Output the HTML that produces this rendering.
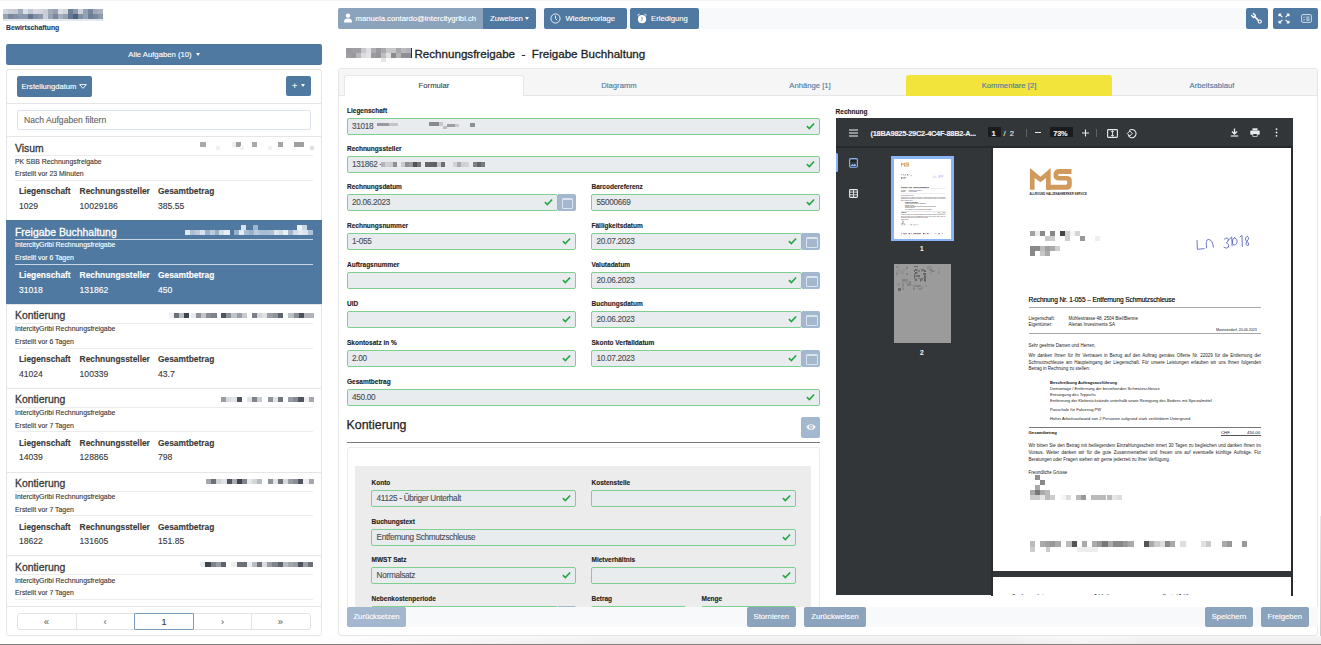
<!DOCTYPE html>
<html><head><meta charset="utf-8">
<style>
*{box-sizing:border-box;margin:0;padding:0}
html,body{width:1321px;height:645px;overflow:hidden;background:#fff;font-family:"Liberation Sans",sans-serif;color:#333;position:relative}
body *{-webkit-text-stroke:0.12px currentColor}
.a{position:absolute}
.t{line-height:1;white-space:nowrap}
.btn{position:absolute;background:#4f79a0;border-radius:2px;color:#fff;font-size:7.7px;line-height:21px;text-align:center;white-space:nowrap}
.lt{background:#a3b7cf}
.md{background:#8ba3bd}
.lbl{position:absolute;font-size:6.5px;font-weight:bold;color:#222;white-space:nowrap;line-height:1}
.inp{position:absolute;height:16.6px;background:#e9ecef;border:1px solid #7fcf8e;border-radius:2px;font-size:8.2px;letter-spacing:-0.3px;color:#4a4f55;line-height:15.6px;padding-left:4.6px;white-space:nowrap;overflow:hidden}
.inp .ck{position:absolute;right:4px;top:3px}
.cal{position:absolute;width:18px;height:16.6px;background:#a3b7cf;border-radius:0 2px 2px 0}
.cal::after{content:"";position:absolute;left:4.2px;top:4.2px;width:9.4px;height:8px;border:1px solid #dbe4ee;border-top-width:2px;border-radius:1.5px}
.tab{position:absolute;top:76px;height:20px;font-size:7.7px;line-height:20px;text-align:center;color:#4f79a0}
.caret{display:inline-block;border-left:2.5px solid transparent;border-right:2.5px solid transparent;border-top:3px solid #fff;vertical-align:1px}
</style></head><body>

<div class="a" style="left:0.00px;top:0.00px;width:1321.00px;height:1.00px;background:#f3f3f3;"></div>
<div class="a" style="left:3.00px;top:9.00px;width:5.00px;height:5.00px;background:rgb(210,214,222);"></div>
<div class="a" style="left:3.00px;top:14.00px;width:5.00px;height:5.00px;background:rgb(150,162,178);"></div>
<div class="a" style="left:8.00px;top:9.00px;width:5.00px;height:5.00px;background:rgb(200,205,214);"></div>
<div class="a" style="left:8.00px;top:14.00px;width:5.00px;height:5.00px;background:rgb(120,136,158);"></div>
<div class="a" style="left:13.00px;top:9.00px;width:5.00px;height:5.00px;background:rgb(196,201,211);"></div>
<div class="a" style="left:13.00px;top:14.00px;width:5.00px;height:5.00px;background:rgb(130,144,164);"></div>
<div class="a" style="left:18.00px;top:9.00px;width:5.00px;height:5.00px;background:rgb(160,170,186);"></div>
<div class="a" style="left:18.00px;top:14.00px;width:5.00px;height:5.00px;background:rgb(140,153,172);"></div>
<div class="a" style="left:23.00px;top:9.00px;width:5.00px;height:5.00px;background:rgb(220,223,229);"></div>
<div class="a" style="left:23.00px;top:14.00px;width:5.00px;height:5.00px;background:rgb(140,153,172);"></div>
<div class="a" style="left:28.00px;top:9.00px;width:5.00px;height:5.00px;background:rgb(194,199,210);"></div>
<div class="a" style="left:28.00px;top:14.00px;width:5.00px;height:5.00px;background:rgb(100,119,145);"></div>
<div class="a" style="left:33.00px;top:9.00px;width:5.00px;height:5.00px;background:rgb(214,217,224);"></div>
<div class="a" style="left:33.00px;top:14.00px;width:5.00px;height:5.00px;background:rgb(130,144,164);"></div>
<div class="a" style="left:38.00px;top:9.00px;width:5.00px;height:5.00px;background:rgb(210,214,220);"></div>
<div class="a" style="left:38.00px;top:14.00px;width:5.00px;height:5.00px;background:rgb(140,153,172);"></div>
<div class="a" style="left:43.00px;top:9.00px;width:5.00px;height:5.00px;background:rgb(200,205,214);"></div>
<div class="a" style="left:43.00px;top:14.00px;width:5.00px;height:5.00px;background:rgb(200,205,214);"></div>
<div class="a" style="left:48.00px;top:9.00px;width:5.00px;height:5.00px;background:rgb(160,171,186);"></div>
<div class="a" style="left:48.00px;top:14.00px;width:5.00px;height:5.00px;background:rgb(150,162,178);"></div>
<div class="a" style="left:53.00px;top:9.00px;width:5.00px;height:5.00px;background:rgb(150,160,178);"></div>
<div class="a" style="left:53.00px;top:14.00px;width:5.00px;height:5.00px;background:rgb(120,136,158);"></div>
<div class="a" style="left:58.00px;top:9.00px;width:5.00px;height:5.00px;background:rgb(218,221,227);"></div>
<div class="a" style="left:58.00px;top:14.00px;width:5.00px;height:5.00px;background:rgb(165,175,190);"></div>
<div class="a" style="left:63.00px;top:9.00px;width:5.00px;height:5.00px;background:rgb(208,212,219);"></div>
<div class="a" style="left:63.00px;top:14.00px;width:5.00px;height:5.00px;background:rgb(150,162,178);"></div>
<div class="a" style="left:68.00px;top:9.00px;width:5.00px;height:5.00px;background:rgb(110,128,152);"></div>
<div class="a" style="left:68.00px;top:14.00px;width:5.00px;height:5.00px;background:rgb(100,119,145);"></div>
<div class="a" style="left:73.00px;top:9.00px;width:5.00px;height:5.00px;background:rgb(140,153,172);"></div>
<div class="a" style="left:73.00px;top:14.00px;width:5.00px;height:5.00px;background:rgb(75,98,128);"></div>
<div class="a" style="left:78.00px;top:9.00px;width:5.00px;height:5.00px;background:rgb(206,210,218);"></div>
<div class="a" style="left:78.00px;top:14.00px;width:5.00px;height:5.00px;background:rgb(130,144,164);"></div>
<div class="a" style="left:83.00px;top:9.00px;width:5.00px;height:5.00px;background:rgb(150,162,178);"></div>
<div class="a" style="left:83.00px;top:14.00px;width:5.00px;height:5.00px;background:rgb(150,162,178);"></div>
<div class="a" style="left:88.00px;top:9.00px;width:5.00px;height:5.00px;background:rgb(118,134,156);"></div>
<div class="a" style="left:88.00px;top:14.00px;width:5.00px;height:5.00px;background:rgb(110,128,152);"></div>
<div class="a" style="left:93.00px;top:9.00px;width:5.00px;height:5.00px;background:rgb(160,170,186);"></div>
<div class="a" style="left:93.00px;top:14.00px;width:5.00px;height:5.00px;background:rgb(120,136,158);"></div>
<div class="a" style="left:98.00px;top:9.00px;width:5.00px;height:5.00px;background:rgb(168,177,191);"></div>
<div class="a" style="left:98.00px;top:14.00px;width:5.00px;height:5.00px;background:rgb(140,153,172);"></div>
<div class="a" style="left:3.00px;top:19.00px;width:100.00px;height:2.00px;background:#e4e7ec;"></div>
<div class="a t" style="left:6.00px;top:25.24px;font-size:6.8px;color:#1f3b5c;font-weight:bold;">Bewirtschaftung</div>
<div class="btn" style="left:6px;top:44px;width:316px;height:21px;">Alle Aufgaben (10) <span class="caret" style="margin-left:2px"></span></div>
<div class="a" style="left:6px;top:69px;width:316px;height:567px;border:1px solid #e6e6e6;border-radius:3px"></div>
<div class="btn" style="left:17px;top:76px;width:75px;height:20.5px;line-height:21px;font-size:7.6px;text-align:left;padding-left:4.5px">Erstellungdatum</div>
<svg class="a" style="left:79px;top:84px" width="8" height="5" viewBox="0 0 8 5"><path d="M0.6 0.6 H7.4 L4 4.4 Z" fill="none" stroke="#fff" stroke-width="0.9" stroke-linejoin="round"/></svg>
<div class="btn" style="left:286px;top:76px;width:25px;height:20px;line-height:20px;font-size:9px">+ <span class="caret" style="vertical-align:2px;margin-left:1px"></span></div>
<div class="a" style="left:7.00px;top:103.00px;width:314.00px;height:1.00px;background:#e5e5e5;"></div>
<div class="a" style="left:17px;top:110px;width:294px;height:20px;border:1px solid #dde3ea;border-radius:2px;font-size:8.6px;color:#666;line-height:18px;padding-left:6px">Nach Aufgaben filtern</div>
<div class="a" style="left:6px;top:136px;width:316px;height:470px;overflow:hidden">
<div class="a" style="left:1.00px;top:0.40px;width:314.00px;height:1.00px;background:#e6e6e6;"></div>
<div class="a t" style="left:9.00px;top:7.89px;font-size:10.4px;color:#3a3a3a;-webkit-text-stroke:0.3px #3a3a3a">Visum</div>
<div class="a" style="left:9.00px;top:19.40px;width:298.00px;height:1.00px;background:#ececec;"></div>
<div class="a t" style="left:9.00px;top:22.56px;font-size:6.9px;color:#383838;">PK SBB Rechnungsfreigabe</div>
<div class="a t" style="left:9.00px;top:35.36px;font-size:6.9px;color:#383838;">Erstellt vor 23 Minuten</div>
<div class="a" style="left:9.00px;top:44.00px;width:298.00px;height:1.00px;background:#ececec;"></div>
<div class="a t" style="left:13.00px;top:51.49px;font-size:8.4px;color:#3a3a3a;font-weight:bold;">Liegenschaft</div>
<div class="a t" style="left:73.60px;top:51.49px;font-size:8.4px;color:#3a3a3a;font-weight:bold;">Rechnungssteller</div>
<div class="a t" style="left:152.00px;top:51.49px;font-size:8.4px;color:#3a3a3a;font-weight:bold;">Gesamtbetrag</div>
<div class="a t" style="left:13.00px;top:65.92px;font-size:8.6px;color:#3a3a3a;">1029</div>
<div class="a t" style="left:73.60px;top:65.92px;font-size:8.6px;color:#3a3a3a;">10029186</div>
<div class="a t" style="left:152.00px;top:65.92px;font-size:8.6px;color:#3a3a3a;">385.55</div>
<div class="a" style="left:194.00px;top:6.40px;width:5.50px;height:5.00px;background:#a9a9ad;"></div>
<div class="a" style="left:226.00px;top:6.40px;width:5.00px;height:5.00px;background:#eeeeef;"></div>
<div class="a" style="left:230.00px;top:6.40px;width:5.00px;height:5.00px;background:#a0a0a4;"></div>
<div class="a" style="left:245.50px;top:6.40px;width:5.00px;height:5.00px;background:#a9a9ad;"></div>
<div class="a" style="left:271.50px;top:6.40px;width:5.50px;height:5.00px;background:#a5a5a8;"></div>
<div class="a" style="left:287.50px;top:6.40px;width:10.50px;height:5.00px;background:#a0a0a4;"></div>
<div class="a" style="left:210.00px;top:10.40px;width:4.00px;height:4.00px;background:#f0f0f2;"></div>
<div class="a" style="left:234.00px;top:10.40px;width:4.00px;height:4.00px;background:#f2f2f3;"></div>
<div class="a" style="left:262.00px;top:10.40px;width:4.00px;height:4.00px;background:#f2f2f3;"></div>
<div class="a" style="left:304.00px;top:10.40px;width:4.00px;height:4.00px;background:#e0e0e2;"></div>
<div class="a" style="left:0.00px;top:84.20px;width:316.00px;height:83.80px;background:#4f79a0;"></div>
<div class="a t" style="left:9.00px;top:91.69px;font-size:10.4px;color:#fff;-webkit-text-stroke:0.3px #fff">Freigabe Buchhaltung</div>
<div class="a" style="left:9.00px;top:103.20px;width:298.00px;height:1.00px;background:#c9d6e3;"></div>
<div class="a t" style="left:9.00px;top:106.36px;font-size:6.9px;color:#fff;">IntercityGribi Rechnungsfreigabe</div>
<div class="a t" style="left:9.00px;top:119.16px;font-size:6.9px;color:#fff;">Erstellt vor 6 Tagen</div>
<div class="a" style="left:9.00px;top:127.80px;width:298.00px;height:1.00px;background:#c9d6e3;"></div>
<div class="a t" style="left:13.00px;top:135.29px;font-size:8.4px;color:#fff;font-weight:bold;">Liegenschaft</div>
<div class="a t" style="left:73.60px;top:135.29px;font-size:8.4px;color:#fff;font-weight:bold;">Rechnungssteller</div>
<div class="a t" style="left:152.00px;top:135.29px;font-size:8.4px;color:#fff;font-weight:bold;">Gesamtbetrag</div>
<div class="a t" style="left:13.00px;top:149.72px;font-size:8.6px;color:#fff;">31018</div>
<div class="a t" style="left:73.60px;top:149.72px;font-size:8.6px;color:#fff;">131862</div>
<div class="a t" style="left:152.00px;top:149.72px;font-size:8.6px;color:#fff;">450</div>
<div class="a" style="left:235.00px;top:89.20px;width:5.00px;height:5.00px;background:#d8e2ec;"></div>
<div class="a" style="left:247.00px;top:89.20px;width:5.00px;height:5.00px;background:#9fb6cc;"></div>
<div class="a" style="left:291.00px;top:89.20px;width:5.00px;height:5.00px;background:#eef3f7;"></div>
<div class="a" style="left:296.00px;top:89.20px;width:5.00px;height:5.00px;background:#c9d7e4;"></div>
<div class="a" style="left:179.00px;top:94.20px;width:5.22px;height:5.30px;background:rgb(222,230,238);"></div><div class="a" style="left:183.92px;top:94.20px;width:5.22px;height:5.30px;background:rgb(171,191,211);"></div><div class="a" style="left:188.85px;top:94.20px;width:5.22px;height:5.30px;background:rgb(188,204,220);"></div><div class="a" style="left:193.77px;top:94.20px;width:5.22px;height:5.30px;background:rgb(217,226,235);"></div><div class="a" style="left:198.69px;top:94.20px;width:5.22px;height:5.30px;background:rgb(152,176,201);"></div><div class="a" style="left:203.62px;top:94.20px;width:5.22px;height:5.30px;background:rgb(186,203,219);"></div><div class="a" style="left:208.54px;top:94.20px;width:5.22px;height:5.30px;background:rgb(150,175,200);"></div><div class="a" style="left:213.46px;top:94.20px;width:5.22px;height:5.30px;background:rgb(211,221,232);"></div><div class="a" style="left:218.38px;top:94.20px;width:5.22px;height:5.30px;background:rgb(230,236,242);"></div><div class="a" style="left:228.23px;top:94.20px;width:5.22px;height:5.30px;background:rgb(152,176,201);"></div><div class="a" style="left:233.15px;top:94.20px;width:5.22px;height:5.30px;background:rgb(229,236,242);"></div><div class="a" style="left:238.08px;top:94.20px;width:5.22px;height:5.30px;background:rgb(168,189,209);"></div><div class="a" style="left:243.00px;top:94.20px;width:5.22px;height:5.30px;background:rgb(152,176,201);"></div><div class="a" style="left:247.92px;top:94.20px;width:5.22px;height:5.30px;background:rgb(187,203,219);"></div><div class="a" style="left:252.85px;top:94.20px;width:5.22px;height:5.30px;background:rgb(169,190,210);"></div><div class="a" style="left:257.77px;top:94.20px;width:5.22px;height:5.30px;background:rgb(168,189,209);"></div><div class="a" style="left:262.69px;top:94.20px;width:5.22px;height:5.30px;background:rgb(174,193,213);"></div><div class="a" style="left:267.62px;top:94.20px;width:5.22px;height:5.30px;background:rgb(221,229,237);"></div><div class="a" style="left:272.54px;top:94.20px;width:5.22px;height:5.30px;background:rgb(204,216,228);"></div><div class="a" style="left:277.46px;top:94.20px;width:5.22px;height:5.30px;background:rgb(234,239,244);"></div><div class="a" style="left:282.38px;top:94.20px;width:5.22px;height:5.30px;background:rgb(160,182,205);"></div><div class="a" style="left:287.31px;top:94.20px;width:5.22px;height:5.30px;background:rgb(211,221,232);"></div><div class="a" style="left:292.23px;top:94.20px;width:5.22px;height:5.30px;background:rgb(229,235,242);"></div><div class="a" style="left:297.15px;top:94.20px;width:5.22px;height:5.30px;background:rgb(220,228,237);"></div><div class="a" style="left:302.08px;top:94.20px;width:5.22px;height:5.30px;background:rgb(175,194,213);"></div>
<div class="a" style="left:1.00px;top:168.00px;width:314.00px;height:1.00px;background:#e6e6e6;"></div>
<div class="a t" style="left:9.00px;top:175.49px;font-size:10.4px;color:#3a3a3a;-webkit-text-stroke:0.3px #3a3a3a">Kontierung</div>
<div class="a" style="left:9.00px;top:187.00px;width:298.00px;height:1.00px;background:#ececec;"></div>
<div class="a t" style="left:9.00px;top:190.16px;font-size:6.9px;color:#383838;">IntercityGribi Rechnungsfreigabe</div>
<div class="a t" style="left:9.00px;top:202.96px;font-size:6.9px;color:#383838;">Erstellt vor 6 Tagen</div>
<div class="a" style="left:9.00px;top:211.60px;width:298.00px;height:1.00px;background:#ececec;"></div>
<div class="a t" style="left:13.00px;top:219.09px;font-size:8.4px;color:#3a3a3a;font-weight:bold;">Liegenschaft</div>
<div class="a t" style="left:73.60px;top:219.09px;font-size:8.4px;color:#3a3a3a;font-weight:bold;">Rechnungssteller</div>
<div class="a t" style="left:152.00px;top:219.09px;font-size:8.4px;color:#3a3a3a;font-weight:bold;">Gesamtbetrag</div>
<div class="a t" style="left:13.00px;top:233.52px;font-size:8.6px;color:#3a3a3a;">41024</div>
<div class="a t" style="left:73.60px;top:233.52px;font-size:8.6px;color:#3a3a3a;">100339</div>
<div class="a t" style="left:152.00px;top:233.52px;font-size:8.6px;color:#3a3a3a;">43.7</div>
<div class="a" style="left:163.08px;top:177.20px;width:5.15px;height:5.20px;background:#f0f0f2;"></div>
<div class="a" style="left:167.93px;top:177.20px;width:5.15px;height:5.20px;background:#6b7079;"></div>
<div class="a" style="left:173.05px;top:177.20px;width:5.15px;height:5.20px;background:#b8bcc2;"></div>
<div class="a" style="left:178.18px;top:177.20px;width:5.15px;height:5.20px;background:#3e4450;"></div>
<div class="a" style="left:184.89px;top:177.20px;width:5.15px;height:5.20px;background:#eaeaec;"></div>
<div class="a" style="left:190.01px;top:177.20px;width:5.15px;height:5.20px;background:#8e929a;"></div>
<div class="a" style="left:195.13px;top:177.20px;width:5.15px;height:5.20px;background:#c2c4c9;"></div>
<div class="a" style="left:200.26px;top:177.20px;width:5.15px;height:5.20px;background:#8a8e96;"></div>
<div class="a" style="left:205.38px;top:177.20px;width:5.15px;height:5.20px;background:#7f838c;"></div>
<div class="a" style="left:215.17px;top:177.20px;width:5.15px;height:5.20px;background:#4e5561;"></div>
<div class="a" style="left:220.29px;top:177.20px;width:5.15px;height:5.20px;background:#8f939a;"></div>
<div class="a" style="left:225.41px;top:177.20px;width:5.15px;height:5.20px;background:#c0c3c7;"></div>
<div class="a" style="left:230.54px;top:177.20px;width:5.15px;height:5.20px;background:#9a9ea4;"></div>
<div class="a" style="left:235.66px;top:177.20px;width:5.15px;height:5.20px;background:#c6c9cd;"></div>
<div class="a" style="left:246.05px;top:177.20px;width:5.15px;height:5.20px;background:#7b8088;"></div>
<div class="a" style="left:251.18px;top:177.20px;width:5.15px;height:5.20px;background:#d4d6d9;"></div>
<div class="a" style="left:256.30px;top:177.20px;width:5.15px;height:5.20px;background:#dfe1e3;"></div>
<div class="a" style="left:261.42px;top:177.20px;width:5.15px;height:5.20px;background:#9a9ea5;"></div>
<div class="a" style="left:266.55px;top:177.20px;width:5.15px;height:5.20px;background:#8f939a;"></div>
<div class="a" style="left:271.67px;top:177.20px;width:5.15px;height:5.20px;background:#5e646e;"></div>
<div class="a" style="left:282.39px;top:177.20px;width:5.15px;height:5.20px;background:#bcc0c5;"></div>
<div class="a" style="left:287.52px;top:177.20px;width:5.15px;height:5.20px;background:#8a8e96;"></div>
<div class="a" style="left:292.64px;top:177.20px;width:5.15px;height:5.20px;background:#4a515c;"></div>
<div class="a" style="left:297.76px;top:177.20px;width:5.15px;height:5.20px;background:#b0b4ba;"></div>
<div class="a" style="left:302.89px;top:177.20px;width:5.15px;height:5.20px;background:#b0b4ba;"></div>
<div class="a" style="left:1.00px;top:251.80px;width:314.00px;height:1.00px;background:#e6e6e6;"></div>
<div class="a t" style="left:9.00px;top:259.29px;font-size:10.4px;color:#3a3a3a;-webkit-text-stroke:0.3px #3a3a3a">Kontierung</div>
<div class="a" style="left:9.00px;top:270.80px;width:298.00px;height:1.00px;background:#ececec;"></div>
<div class="a t" style="left:9.00px;top:273.96px;font-size:6.9px;color:#383838;">IntercityGribi Rechnungsfreigabe</div>
<div class="a t" style="left:9.00px;top:286.76px;font-size:6.9px;color:#383838;">Erstellt vor 7 Tagen</div>
<div class="a" style="left:9.00px;top:295.40px;width:298.00px;height:1.00px;background:#ececec;"></div>
<div class="a t" style="left:13.00px;top:302.89px;font-size:8.4px;color:#3a3a3a;font-weight:bold;">Liegenschaft</div>
<div class="a t" style="left:73.60px;top:302.89px;font-size:8.4px;color:#3a3a3a;font-weight:bold;">Rechnungssteller</div>
<div class="a t" style="left:152.00px;top:302.89px;font-size:8.4px;color:#3a3a3a;font-weight:bold;">Gesamtbetrag</div>
<div class="a t" style="left:13.00px;top:317.32px;font-size:8.6px;color:#3a3a3a;">14039</div>
<div class="a t" style="left:73.60px;top:317.32px;font-size:8.6px;color:#3a3a3a;">128865</div>
<div class="a t" style="left:152.00px;top:317.32px;font-size:8.6px;color:#3a3a3a;">798</div>
<div class="a" style="left:215.17px;top:261.20px;width:5.15px;height:5.20px;background:#9a9ea4;"></div>
<div class="a" style="left:220.29px;top:261.20px;width:5.15px;height:5.20px;background:#dadcdf;"></div>
<div class="a" style="left:225.41px;top:261.20px;width:5.15px;height:5.20px;background:#e2e4e6;"></div>
<div class="a" style="left:230.54px;top:261.20px;width:5.15px;height:5.20px;background:#4e5561;"></div>
<div class="a" style="left:240.97px;top:261.20px;width:5.15px;height:5.20px;background:#e0e2e4;"></div>
<div class="a" style="left:246.09px;top:261.20px;width:5.15px;height:5.20px;background:#7f848b;"></div>
<div class="a" style="left:251.21px;top:261.20px;width:5.15px;height:5.20px;background:#c8cacd;"></div>
<div class="a" style="left:261.80px;top:261.20px;width:5.15px;height:5.20px;background:#8f939a;"></div>
<div class="a" style="left:266.92px;top:261.20px;width:5.15px;height:5.20px;background:#e2e4e6;"></div>
<div class="a" style="left:272.05px;top:261.20px;width:5.15px;height:5.20px;background:#6f747c;"></div>
<div class="a" style="left:282.15px;top:261.20px;width:5.15px;height:5.20px;background:#9a9ea4;"></div>
<div class="a" style="left:287.27px;top:261.20px;width:5.15px;height:5.20px;background:#868a92;"></div>
<div class="a" style="left:292.40px;top:261.20px;width:5.15px;height:5.20px;background:#4e5561;"></div>
<div class="a" style="left:297.52px;top:261.20px;width:5.15px;height:5.20px;background:#eceef0;"></div>
<div class="a" style="left:302.64px;top:261.20px;width:5.15px;height:5.20px;background:#a4a8ae;"></div>
<div class="a" style="left:1.00px;top:335.60px;width:314.00px;height:1.00px;background:#e6e6e6;"></div>
<div class="a t" style="left:9.00px;top:343.09px;font-size:10.4px;color:#3a3a3a;-webkit-text-stroke:0.3px #3a3a3a">Kontierung</div>
<div class="a" style="left:9.00px;top:354.60px;width:298.00px;height:1.00px;background:#ececec;"></div>
<div class="a t" style="left:9.00px;top:357.76px;font-size:6.9px;color:#383838;">IntercityGribi Rechnungsfreigabe</div>
<div class="a t" style="left:9.00px;top:370.56px;font-size:6.9px;color:#383838;">Erstellt vor 7 Tagen</div>
<div class="a" style="left:9.00px;top:379.20px;width:298.00px;height:1.00px;background:#ececec;"></div>
<div class="a t" style="left:13.00px;top:386.69px;font-size:8.4px;color:#3a3a3a;font-weight:bold;">Liegenschaft</div>
<div class="a t" style="left:73.60px;top:386.69px;font-size:8.4px;color:#3a3a3a;font-weight:bold;">Rechnungssteller</div>
<div class="a t" style="left:152.00px;top:386.69px;font-size:8.4px;color:#3a3a3a;font-weight:bold;">Gesamtbetrag</div>
<div class="a t" style="left:13.00px;top:401.12px;font-size:8.6px;color:#3a3a3a;">18622</div>
<div class="a t" style="left:73.60px;top:401.12px;font-size:8.6px;color:#3a3a3a;">131605</div>
<div class="a t" style="left:152.00px;top:401.12px;font-size:8.6px;color:#3a3a3a;">151.85</div>
<div class="a" style="left:200.03px;top:343.30px;width:5.15px;height:5.20px;background:#a4a8ae;"></div>
<div class="a" style="left:205.15px;top:343.30px;width:5.15px;height:5.20px;background:#6b7079;"></div>
<div class="a" style="left:210.27px;top:343.30px;width:5.15px;height:5.20px;background:#d0d3d6;"></div>
<div class="a" style="left:215.40px;top:343.30px;width:5.15px;height:5.20px;background:#e0e2e4;"></div>
<div class="a" style="left:220.52px;top:343.30px;width:5.15px;height:5.20px;background:#4e5561;"></div>
<div class="a" style="left:225.64px;top:343.30px;width:5.15px;height:5.20px;background:#a8acb2;"></div>
<div class="a" style="left:230.77px;top:343.30px;width:5.15px;height:5.20px;background:#3e4450;"></div>
<div class="a" style="left:235.89px;top:343.30px;width:5.15px;height:5.20px;background:#7f838c;"></div>
<div class="a" style="left:241.02px;top:343.30px;width:5.15px;height:5.20px;background:#e6e8ea;"></div>
<div class="a" style="left:246.14px;top:343.30px;width:5.15px;height:5.20px;background:#d4d6d9;"></div>
<div class="a" style="left:251.26px;top:343.30px;width:5.15px;height:5.20px;background:#b8bcc2;"></div>
<div class="a" style="left:261.56px;top:343.30px;width:5.15px;height:5.20px;background:#8f939a;"></div>
<div class="a" style="left:266.68px;top:343.30px;width:5.15px;height:5.20px;background:#e2e4e6;"></div>
<div class="a" style="left:271.81px;top:343.30px;width:5.15px;height:5.20px;background:#6f747c;"></div>
<div class="a" style="left:276.93px;top:343.30px;width:5.15px;height:5.20px;background:#d8dadd;"></div>
<div class="a" style="left:282.05px;top:343.30px;width:5.15px;height:5.20px;background:#9a9ea4;"></div>
<div class="a" style="left:287.18px;top:343.30px;width:5.15px;height:5.20px;background:#8a8e96;"></div>
<div class="a" style="left:292.30px;top:343.30px;width:5.15px;height:5.20px;background:#4e5561;"></div>
<div class="a" style="left:297.42px;top:343.30px;width:5.15px;height:5.20px;background:#eceef0;"></div>
<div class="a" style="left:302.55px;top:343.30px;width:5.15px;height:5.20px;background:#a4a8ae;"></div>
<div class="a" style="left:1.00px;top:419.40px;width:314.00px;height:1.00px;background:#e6e6e6;"></div>
<div class="a t" style="left:9.00px;top:426.89px;font-size:10.4px;color:#3a3a3a;-webkit-text-stroke:0.3px #3a3a3a">Kontierung</div>
<div class="a" style="left:9.00px;top:438.40px;width:298.00px;height:1.00px;background:#ececec;"></div>
<div class="a t" style="left:9.00px;top:441.56px;font-size:6.9px;color:#383838;">IntercityGribi Rechnungsfreigabe</div>
<div class="a t" style="left:9.00px;top:454.36px;font-size:6.9px;color:#383838;">Erstellt vor 7 Tagen</div>
<div class="a" style="left:9.00px;top:463.00px;width:298.00px;height:1.00px;background:#ececec;"></div>
<div class="a t" style="left:13.00px;top:470.49px;font-size:8.4px;color:#3a3a3a;font-weight:bold;">Liegenschaft</div>
<div class="a t" style="left:73.60px;top:470.49px;font-size:8.4px;color:#3a3a3a;font-weight:bold;">Rechnungssteller</div>
<div class="a t" style="left:152.00px;top:470.49px;font-size:8.4px;color:#3a3a3a;font-weight:bold;">Gesamtbetrag</div>
<div class="a" style="left:194.33px;top:426.30px;width:5.15px;height:5.20px;background:#e8eaec;"></div>
<div class="a" style="left:199.46px;top:426.30px;width:5.15px;height:5.20px;background:#3e4450;"></div>
<div class="a" style="left:204.58px;top:426.30px;width:5.15px;height:5.20px;background:#7f838c;"></div>
<div class="a" style="left:209.70px;top:426.30px;width:5.15px;height:5.20px;background:#9a9ea4;"></div>
<div class="a" style="left:214.83px;top:426.30px;width:5.15px;height:5.20px;background:#5e646e;"></div>
<div class="a" style="left:225.46px;top:426.30px;width:5.15px;height:5.20px;background:#eceef0;"></div>
<div class="a" style="left:230.59px;top:426.30px;width:5.15px;height:5.20px;background:#6b7079;"></div>
<div class="a" style="left:235.71px;top:426.30px;width:5.15px;height:5.20px;background:#6b7079;"></div>
<div class="a" style="left:240.83px;top:426.30px;width:5.15px;height:5.20px;background:#eceef0;"></div>
<div class="a" style="left:245.96px;top:426.30px;width:5.15px;height:5.20px;background:#b8bcc2;"></div>
<div class="a" style="left:251.08px;top:426.30px;width:5.15px;height:5.20px;background:#6f747c;"></div>
<div class="a" style="left:256.20px;top:426.30px;width:5.15px;height:5.20px;background:#dadcdf;"></div>
<div class="a" style="left:261.33px;top:426.30px;width:5.15px;height:5.20px;background:#9a9ea4;"></div>
<div class="a" style="left:266.45px;top:426.30px;width:5.15px;height:5.20px;background:#7f838c;"></div>
<div class="a" style="left:271.58px;top:426.30px;width:5.15px;height:5.20px;background:#5e646e;"></div>
<div class="a" style="left:276.70px;top:426.30px;width:5.15px;height:5.20px;background:#b8bcc2;"></div>
<div class="a" style="left:281.82px;top:426.30px;width:5.15px;height:5.20px;background:#a4a8ae;"></div>
<div class="a" style="left:286.95px;top:426.30px;width:5.15px;height:5.20px;background:#9a9ea4;"></div>
<div class="a" style="left:292.07px;top:426.30px;width:5.15px;height:5.20px;background:#4e5561;"></div>
<div class="a" style="left:297.19px;top:426.30px;width:5.15px;height:5.20px;background:#9a9ea4;"></div>
<div class="a" style="left:302.32px;top:426.30px;width:5.15px;height:5.20px;background:#6b7079;"></div>
</div>
<div class="a" style="left:7.00px;top:606.00px;width:314.00px;height:1.00px;background:#e5e5e5;"></div>
<div class="a" style="left:17px;top:613px;width:294px;height:16.5px;border:1px solid #e3e3e3;border-radius:3px"></div>
<div class="a" style="left:76.00px;top:614.00px;width:1.00px;height:14.50px;background:#e3e3e3;"></div>
<div class="a" style="left:251.00px;top:614.00px;width:1.00px;height:14.50px;background:#e3e3e3;"></div>
<div class="a" style="left:134px;top:613px;width:60px;height:16.5px;border:1px solid #7a9cc0;border-radius:1px"></div>
<div class="a" style="left:17px;top:614px;width:59px;height:16px;line-height:16px;text-align:center;font-size:9.5px;color:#666">&laquo;</div>
<div class="a" style="left:76px;top:614px;width:58px;height:16px;line-height:16px;text-align:center;font-size:9.5px;color:#666">&lsaquo;</div>
<div class="a" style="left:134px;top:614px;width:60px;height:16px;line-height:16px;text-align:center;font-size:9px;color:#333">1</div>
<div class="a" style="left:194px;top:614px;width:57px;height:16px;line-height:16px;text-align:center;font-size:9.5px;color:#666">&rsaquo;</div>
<div class="a" style="left:251px;top:614px;width:59px;height:16px;line-height:16px;text-align:center;font-size:9.5px;color:#666">&raquo;</div>
<div class="a" style="left:536.00px;top:8.00px;width:710.00px;height:21.00px;background:#f8f9fa;"></div>
<div class="btn md" style="left:338px;top:8px;width:146px;height:21px;border-radius:2px 0 0 2px;text-align:left;padding-left:17.5px">manuela.contardo@intercitygribi.ch</div>
<svg class="a" style="left:344px;top:13px" width="8" height="10" viewBox="0 0 8 10"><circle cx="4" cy="2.6" r="2.2" fill="#fff"/><path d="M0 9.5 C0 6.2 1.8 5.6 4 5.6 C6.2 5.6 8 6.2 8 9.5 Z" fill="#fff"/></svg>
<div class="btn" style="left:483px;top:8px;width:53px;height:21px;border-radius:0 2px 2px 0">Zuweisen <span class="caret"></span></div>
<div class="btn" style="left:544px;top:8px;width:83px;height:21px;text-align:left;padding-left:21.5px">Wiedervorlage</div>
<svg class="a" style="left:550px;top:12.5px" width="11" height="11" viewBox="0 0 11 11"><circle cx="5.5" cy="5.5" r="4.6" fill="none" stroke="#e8eef4" stroke-width="1"/><path d="M5.5 2.6 V5.7 L7.3 7.2" fill="none" stroke="#e8eef4" stroke-width="1"/></svg>
<div class="btn" style="left:630px;top:8px;width:69px;height:21px;text-align:left;padding-left:21px">Erledigung</div>
<svg class="a" style="left:636.5px;top:13px" width="10" height="11" viewBox="0 0 10 11"><circle cx="5" cy="6.2" r="4.1" fill="#fff"/><path d="M0.6 3 A1.8 1.8 0 0 1 3 0.8 Z M9.4 3 A1.8 1.8 0 0 0 7 0.8 Z" fill="#fff"/><path d="M5 3.8 V6.6 L4 7.8" stroke="#4f79a0" stroke-width="0.8" fill="none"/></svg>
<div class="btn" style="left:1246px;top:8px;width:22px;height:21px"></div>
<svg class="a" style="left:1250px;top:12px" width="13" height="13" viewBox="0 0 13 13"><g fill="none" stroke="#fff" stroke-linecap="round" stroke-linejoin="round"><path d="M1.6 3.4 L3.6 5.4 L5.4 3.6 L3.4 1.6" stroke-width="1.4"/><path d="M4.6 4.6 L8.6 8.6" stroke-width="1.5"/><circle cx="9.8" cy="9.6" r="1.6" stroke-width="1.1"/></g></svg>
<div class="btn" style="left:1273px;top:8px;width:45px;height:21px"></div>
<svg class="a" style="left:1278px;top:13px" width="12" height="11" viewBox="0 0 12 11"><g stroke="#fff" stroke-width="1.1" fill="none"><path d="M1 1 L4.4 4.2 M1 0.9 V3.3 M0.9 1 H3.3"/><path d="M11 1 L7.6 4.2 M11 0.9 V3.3 M11.1 1 H8.7"/><path d="M1 10 L4.4 6.8 M1 10.1 V7.7 M0.9 10 H3.3"/><path d="M11 10 L7.6 6.8 M11 10.1 V7.7 M11.1 10 H8.7"/></g></svg>
<svg class="a" style="left:1300.5px;top:13.5px" width="11" height="9" viewBox="0 0 11 9"><rect x="0.6" y="0.6" width="9.8" height="7.8" rx="1.2" fill="none" stroke="#dfe6ee" stroke-width="0.9"/><path d="M2.3 3.3 L3 3.9 L4 2.5 M2.3 5.8 L3 6.4 L4 5" stroke="#dfe6ee" stroke-width="0.7" fill="none"/><path d="M5.2 3 H8.6 M5.2 4 H8.6 M5.2 5.3 H8.6 M5.2 6.3 H8.6" stroke="#dfe6ee" stroke-width="0.7"/></svg>
<div class="a" style="left:346.00px;top:48.00px;width:5.30px;height:5.30px;background:rgb(154,154,158);"></div><div class="a" style="left:351.00px;top:48.00px;width:5.30px;height:5.30px;background:rgb(158,158,162);"></div><div class="a" style="left:356.00px;top:48.00px;width:5.30px;height:5.30px;background:rgb(158,158,163);"></div><div class="a" style="left:361.00px;top:48.00px;width:5.30px;height:5.30px;background:rgb(200,200,202);"></div><div class="a" style="left:366.00px;top:48.00px;width:5.30px;height:5.30px;background:rgb(224,224,226);"></div><div class="a" style="left:371.00px;top:48.00px;width:5.30px;height:5.30px;background:rgb(175,175,178);"></div><div class="a" style="left:376.00px;top:48.00px;width:5.30px;height:5.30px;background:rgb(155,155,159);"></div><div class="a" style="left:381.00px;top:48.00px;width:5.30px;height:5.30px;background:rgb(170,170,174);"></div><div class="a" style="left:386.00px;top:48.00px;width:5.30px;height:5.30px;background:rgb(199,199,202);"></div><div class="a" style="left:391.00px;top:48.00px;width:5.30px;height:5.30px;background:rgb(197,197,200);"></div><div class="a" style="left:396.00px;top:48.00px;width:5.30px;height:5.30px;background:rgb(167,167,171);"></div><div class="a" style="left:401.00px;top:48.00px;width:5.30px;height:5.30px;background:rgb(185,185,188);"></div><div class="a" style="left:406.00px;top:48.00px;width:5.30px;height:5.30px;background:rgb(179,179,183);"></div><div class="a" style="left:346.00px;top:53.00px;width:5.30px;height:5.30px;background:rgb(160,160,164);"></div><div class="a" style="left:351.00px;top:53.00px;width:5.30px;height:5.30px;background:rgb(154,154,158);"></div><div class="a" style="left:356.00px;top:53.00px;width:5.30px;height:5.30px;background:rgb(185,185,189);"></div><div class="a" style="left:361.00px;top:53.00px;width:5.30px;height:5.30px;background:rgb(220,220,222);"></div><div class="a" style="left:366.00px;top:53.00px;width:5.30px;height:5.30px;background:rgb(227,227,229);"></div><div class="a" style="left:371.00px;top:53.00px;width:5.30px;height:5.30px;background:rgb(155,155,159);"></div><div class="a" style="left:376.00px;top:53.00px;width:5.30px;height:5.30px;background:rgb(150,150,154);"></div><div class="a" style="left:381.00px;top:53.00px;width:5.30px;height:5.30px;background:rgb(191,191,194);"></div><div class="a" style="left:386.00px;top:53.00px;width:5.30px;height:5.30px;background:rgb(224,224,226);"></div><div class="a" style="left:391.00px;top:53.00px;width:5.30px;height:5.30px;background:rgb(138,138,143);"></div><div class="a" style="left:396.00px;top:53.00px;width:5.30px;height:5.30px;background:rgb(180,180,183);"></div><div class="a" style="left:401.00px;top:53.00px;width:5.30px;height:5.30px;background:rgb(142,142,147);"></div><div class="a" style="left:406.00px;top:53.00px;width:5.30px;height:5.30px;background:rgb(143,143,147);"></div>
<div class="a" style="left:381.00px;top:58.00px;width:5.00px;height:4.00px;background:#e6e6e8;"></div>
<div class="a" style="left:411.00px;top:48.00px;width:1.00px;height:10.00px;background:#333;"></div>
<div class="a t" style="left:414.50px;top:47.77px;font-size:11.6px;color:#222;-webkit-text-stroke:0.3px #222">Rechnungsfreigabe &nbsp;-&nbsp; Freigabe Buchhaltung</div>
<div class="a" style="left:338px;top:68px;width:980px;height:568px;border:1px solid #e6e6e6;border-radius:3px"></div>
<div class="a" style="left:339.00px;top:69.00px;width:978.00px;height:27.00px;background:#f6f6f6;border-bottom:1px solid #e6e6e8"></div>
<div class="tab" style="left:344px;top:75.3px;width:180px;background:#fff;border:1px solid #e8e8eb;border-bottom:none;color:#444;border-radius:3px 3px 0 0;height:20.4px;line-height:20.2px">Formular</div>
<div class="tab" style="left:524px;width:190px">Diagramm</div>
<div class="tab" style="left:714px;width:192px">Anhänge [1]</div>
<div class="tab" style="left:906px;top:75.3px;width:206px;height:20.4px;line-height:21.6px;background:#f2e43a;color:#4f79a0;border-radius:3px 3px 0 0">Kommentare [2]</div>
<div class="tab" style="left:1112px;width:200px">Arbeitsablauf</div>
<div class="a t" style="left:347.00px;top:107.99px;font-size:6.5px;color:#222;font-weight:bold;">Liegenschaft</div><div class="inp" style="left:346.50px;top:118.00px;width:473.50px">3101<span style="letter-spacing:-1px">8</span><svg class="ck" viewBox="0 0 10 8" width="9" height="8"><path d="M1 4.2 L3.7 6.8 L9 1.2" fill="none" stroke="#28a745" stroke-width="1.9"/></svg></div>
<div class="a" style="left:376.50px;top:122.50px;width:12.00px;height:3.00px;background:#9a9a9e;"></div>
<div class="a" style="left:388.50px;top:122.50px;width:9.00px;height:3.00px;background:#c4c4c8;"></div>
<div class="a" style="left:428.50px;top:121.50px;width:10.00px;height:4.00px;background:#8a8a8e;"></div>
<div class="a" style="left:438.50px;top:121.50px;width:4.00px;height:4.00px;background:#c8c8cc;"></div>
<div class="a" style="left:443.00px;top:125.50px;width:4.00px;height:3.00px;background:#bdbdc0;"></div>
<div class="a" style="left:447.00px;top:123.50px;width:8.00px;height:3.00px;background:#9d9da0;"></div>
<div class="a" style="left:455.00px;top:123.50px;width:4.00px;height:3.00px;background:#c8c8cc;"></div>
<div class="a" style="left:469.50px;top:122.50px;width:5.00px;height:4.00px;background:#8f8f93;"></div>
<div class="a t" style="left:347.00px;top:145.99px;font-size:6.5px;color:#222;font-weight:bold;">Rechnungssteller</div><div class="inp" style="left:346.50px;top:156.00px;width:473.50px">131862 -<svg class="ck" viewBox="0 0 10 8" width="9" height="8"><path d="M1 4.2 L3.7 6.8 L9 1.2" fill="none" stroke="#28a745" stroke-width="1.9"/></svg></div>
<div class="a" style="left:381.00px;top:162.00px;width:4.30px;height:4.80px;background:rgb(180,180,185);"></div><div class="a" style="left:385.00px;top:162.00px;width:4.30px;height:4.80px;background:rgb(207,207,212);"></div><div class="a" style="left:389.00px;top:162.00px;width:4.30px;height:4.80px;background:rgb(204,204,209);"></div><div class="a" style="left:393.00px;top:162.00px;width:4.30px;height:4.80px;background:rgb(142,142,147);"></div><div class="a" style="left:401.00px;top:162.00px;width:4.30px;height:4.80px;background:rgb(201,201,206);"></div><div class="a" style="left:405.00px;top:162.00px;width:4.30px;height:4.80px;background:rgb(143,143,148);"></div><div class="a" style="left:409.00px;top:162.00px;width:4.30px;height:4.80px;background:rgb(153,153,158);"></div><div class="a" style="left:413.00px;top:162.00px;width:4.30px;height:4.80px;background:rgb(81,81,86);"></div><div class="a" style="left:417.00px;top:162.00px;width:4.30px;height:4.80px;background:rgb(117,117,122);"></div><div class="a" style="left:425.00px;top:162.00px;width:4.30px;height:4.80px;background:rgb(101,101,106);"></div><div class="a" style="left:429.00px;top:162.00px;width:4.30px;height:4.80px;background:rgb(98,98,103);"></div><div class="a" style="left:433.00px;top:162.00px;width:4.30px;height:4.80px;background:rgb(97,97,102);"></div><div class="a" style="left:437.00px;top:162.00px;width:4.30px;height:4.80px;background:rgb(197,197,202);"></div><div class="a" style="left:441.00px;top:162.00px;width:4.30px;height:4.80px;background:rgb(109,109,114);"></div><div class="a" style="left:453.00px;top:162.00px;width:4.30px;height:4.80px;background:rgb(209,209,214);"></div><div class="a" style="left:457.00px;top:162.00px;width:4.30px;height:4.80px;background:rgb(171,171,176);"></div><div class="a" style="left:461.00px;top:162.00px;width:4.30px;height:4.80px;background:rgb(207,207,212);"></div><div class="a" style="left:465.00px;top:162.00px;width:4.30px;height:4.80px;background:rgb(210,210,215);"></div><div class="a" style="left:473.00px;top:162.00px;width:4.30px;height:4.80px;background:rgb(128,128,133);"></div><div class="a" style="left:477.00px;top:162.00px;width:4.30px;height:4.80px;background:rgb(99,99,104);"></div><div class="a" style="left:481.00px;top:162.00px;width:4.30px;height:4.80px;background:rgb(120,120,125);"></div>
<div class="a t" style="left:347.00px;top:183.99px;font-size:6.5px;color:#222;font-weight:bold;">Rechnungsdatum</div><div class="inp" style="left:346.50px;top:194.00px;width:211.00px">20.06.2023<svg class="ck" viewBox="0 0 10 8" width="9" height="8"><path d="M1 4.2 L3.7 6.8 L9 1.2" fill="none" stroke="#28a745" stroke-width="1.9"/></svg></div><div class="cal" style="left:557.50px;top:194.00px"></div>
<div class="a t" style="left:591.50px;top:183.99px;font-size:6.5px;color:#222;font-weight:bold;">Barcodereferenz</div><div class="inp" style="left:591.00px;top:194.00px;width:229.00px">55000669<svg class="ck" viewBox="0 0 10 8" width="9" height="8"><path d="M1 4.2 L3.7 6.8 L9 1.2" fill="none" stroke="#28a745" stroke-width="1.9"/></svg></div>
<div class="a t" style="left:347.00px;top:222.99px;font-size:6.5px;color:#222;font-weight:bold;">Rechnungsnummer</div><div class="inp" style="left:346.50px;top:233.00px;width:229.00px">1-055<svg class="ck" viewBox="0 0 10 8" width="9" height="8"><path d="M1 4.2 L3.7 6.8 L9 1.2" fill="none" stroke="#28a745" stroke-width="1.9"/></svg></div>
<div class="a t" style="left:591.50px;top:222.99px;font-size:6.5px;color:#222;font-weight:bold;">Fälligkeitsdatum</div><div class="inp" style="left:591.00px;top:233.00px;width:211.00px">20.07.2023<svg class="ck" viewBox="0 0 10 8" width="9" height="8"><path d="M1 4.2 L3.7 6.8 L9 1.2" fill="none" stroke="#28a745" stroke-width="1.9"/></svg></div><div class="cal" style="left:802.00px;top:233.00px"></div>
<div class="a t" style="left:347.00px;top:261.99px;font-size:6.5px;color:#222;font-weight:bold;">Auftragsnummer</div><div class="inp" style="left:346.50px;top:272.00px;width:229.00px"><svg class="ck" viewBox="0 0 10 8" width="9" height="8"><path d="M1 4.2 L3.7 6.8 L9 1.2" fill="none" stroke="#28a745" stroke-width="1.9"/></svg></div>
<div class="a t" style="left:591.50px;top:261.99px;font-size:6.5px;color:#222;font-weight:bold;">Valutadatum</div><div class="inp" style="left:591.00px;top:272.00px;width:211.00px">20.06.2023<svg class="ck" viewBox="0 0 10 8" width="9" height="8"><path d="M1 4.2 L3.7 6.8 L9 1.2" fill="none" stroke="#28a745" stroke-width="1.9"/></svg></div><div class="cal" style="left:802.00px;top:272.00px"></div>
<div class="a t" style="left:347.00px;top:300.99px;font-size:6.5px;color:#222;font-weight:bold;">UID</div><div class="inp" style="left:346.50px;top:311.00px;width:229.00px"><svg class="ck" viewBox="0 0 10 8" width="9" height="8"><path d="M1 4.2 L3.7 6.8 L9 1.2" fill="none" stroke="#28a745" stroke-width="1.9"/></svg></div>
<div class="a t" style="left:591.50px;top:300.99px;font-size:6.5px;color:#222;font-weight:bold;">Buchungsdatum</div><div class="inp" style="left:591.00px;top:311.00px;width:211.00px">20.06.2023<svg class="ck" viewBox="0 0 10 8" width="9" height="8"><path d="M1 4.2 L3.7 6.8 L9 1.2" fill="none" stroke="#28a745" stroke-width="1.9"/></svg></div><div class="cal" style="left:802.00px;top:311.00px"></div>
<div class="a t" style="left:347.00px;top:339.99px;font-size:6.5px;color:#222;font-weight:bold;">Skontosatz in %</div><div class="inp" style="left:346.50px;top:350.00px;width:229.00px">2.00<svg class="ck" viewBox="0 0 10 8" width="9" height="8"><path d="M1 4.2 L3.7 6.8 L9 1.2" fill="none" stroke="#28a745" stroke-width="1.9"/></svg></div>
<div class="a t" style="left:591.50px;top:339.99px;font-size:6.5px;color:#222;font-weight:bold;">Skonto Verfalldatum</div><div class="inp" style="left:591.00px;top:350.00px;width:211.00px">10.07.2023<svg class="ck" viewBox="0 0 10 8" width="9" height="8"><path d="M1 4.2 L3.7 6.8 L9 1.2" fill="none" stroke="#28a745" stroke-width="1.9"/></svg></div><div class="cal" style="left:802.00px;top:350.00px"></div>
<div class="a t" style="left:347.00px;top:378.99px;font-size:6.5px;color:#222;font-weight:bold;">Gesamtbetrag</div><div class="inp" style="left:346.50px;top:389.00px;width:473.50px">450.00<svg class="ck" viewBox="0 0 10 8" width="9" height="8"><path d="M1 4.2 L3.7 6.8 L9 1.2" fill="none" stroke="#28a745" stroke-width="1.9"/></svg></div>
<div class="a t" style="left:346.50px;top:418.80px;font-size:12.4px;color:#222;-webkit-text-stroke:0.25px #222">Kontierung</div>
<div class="a" style="left:801px;top:417px;width:19px;height:21px;background:#a3b7cf;border-radius:2px"></div>
<svg class="a" style="left:805.5px;top:422.5px" width="10" height="8" viewBox="0 0 10 8"><path d="M0.3 4 C2.3 0.2 7.7 0.2 9.7 4 C7.7 7.8 2.3 7.8 0.3 4 Z M5 2 A2 2 0 1 0 5 6 A2 2 0 1 0 5 2 Z" fill="#f4f7fa" fill-rule="evenodd"/><circle cx="5" cy="4" r="0.9" fill="#dfe7ef"/></svg>
<div class="a" style="left:346.50px;top:442.00px;width:473.50px;height:1.00px;background:#7a7a7a;"></div>
<div class="a" style="left:339px;top:446px;width:490px;height:161px;overflow:hidden">
<div class="a" style="left:7.5px;top:1.2px;width:473px;height:200px;border:1px solid #ececec;border-radius:3px"></div>
<div class="a" style="left:16.2px;top:20px;width:456px;height:200px;background:#ececec"></div>
<div class="a t" style="left:32.50px;top:33.99px;font-size:6.5px;color:#222;font-weight:bold;">Konto</div><div class="inp" style="left:32.00px;top:44.00px;width:205.00px">41125 - Übriger Unterhalt<svg class="ck" viewBox="0 0 10 8" width="9" height="8"><path d="M1 4.2 L3.7 6.8 L9 1.2" fill="none" stroke="#28a745" stroke-width="1.9"/></svg></div>
<div class="a t" style="left:252.50px;top:33.99px;font-size:6.5px;color:#222;font-weight:bold;">Kostenstelle</div><div class="inp" style="left:252.00px;top:44.00px;width:205.00px"><svg class="ck" viewBox="0 0 10 8" width="9" height="8"><path d="M1 4.2 L3.7 6.8 L9 1.2" fill="none" stroke="#28a745" stroke-width="1.9"/></svg></div>
<div class="a t" style="left:32.50px;top:72.99px;font-size:6.5px;color:#222;font-weight:bold;">Buchungstext</div><div class="inp" style="left:32.00px;top:83.00px;width:425.00px">Entfernung Schmutzschleuse<svg class="ck" viewBox="0 0 10 8" width="9" height="8"><path d="M1 4.2 L3.7 6.8 L9 1.2" fill="none" stroke="#28a745" stroke-width="1.9"/></svg></div>
<div class="a t" style="left:32.50px;top:110.99px;font-size:6.5px;color:#222;font-weight:bold;">MWST Satz</div><div class="inp" style="left:32.00px;top:121.00px;width:205.00px">Normalsatz<svg class="ck" viewBox="0 0 10 8" width="9" height="8"><path d="M1 4.2 L3.7 6.8 L9 1.2" fill="none" stroke="#28a745" stroke-width="1.9"/></svg></div>
<div class="a t" style="left:252.50px;top:110.99px;font-size:6.5px;color:#222;font-weight:bold;">Mietverhältnis</div><div class="inp" style="left:252.00px;top:121.00px;width:205.00px"><svg class="ck" viewBox="0 0 10 8" width="9" height="8"><path d="M1 4.2 L3.7 6.8 L9 1.2" fill="none" stroke="#28a745" stroke-width="1.9"/></svg></div>
<div class="a t" style="left:32.50px;top:149.59px;font-size:6.5px;color:#222;font-weight:bold;">Nebenkostenperiode</div><div class="inp" style="left:32.00px;top:159.60px;width:187.00px"><svg class="ck" viewBox="0 0 10 8" width="9" height="8"><path d="M1 4.2 L3.7 6.8 L9 1.2" fill="none" stroke="#28a745" stroke-width="1.9"/></svg></div><div class="cal" style="left:219.00px;top:159.60px"></div>
<div class="a t" style="left:252.50px;top:149.59px;font-size:6.5px;color:#222;font-weight:bold;">Betrag</div><div class="inp" style="left:252.00px;top:159.60px;width:94.50px"><svg class="ck" viewBox="0 0 10 8" width="9" height="8"><path d="M1 4.2 L3.7 6.8 L9 1.2" fill="none" stroke="#28a745" stroke-width="1.9"/></svg></div>
<div class="a t" style="left:362.50px;top:149.59px;font-size:6.5px;color:#222;font-weight:bold;">Menge</div><div class="inp" style="left:362.00px;top:159.60px;width:94.50px"><svg class="ck" viewBox="0 0 10 8" width="9" height="8"><path d="M1 4.2 L3.7 6.8 L9 1.2" fill="none" stroke="#28a745" stroke-width="1.9"/></svg></div>
</div>
<div class="a" style="left:836.00px;top:118.00px;width:457.00px;height:477.00px;background:#323639;"></div>
<div class="a" style="left:836.00px;top:146.00px;width:457.00px;height:1.50px;background:#26292b;"></div>
<svg class="a" style="left:848.5px;top:128.5px" width="9" height="8" viewBox="0 0 9 8"><path d="M0 1 H9 M0 4 H9 M0 7 H9" stroke="#f1f1f1" stroke-width="1.1"/></svg>
<div class="a t" style="left:870.50px;top:129.83px;font-size:7.4px;color:#f1f1f1;font-weight:bold;letter-spacing:-0.25px">(18BA9825-29C2-4C4F-88B2-A...</div>
<div class="a" style="left:988.40px;top:127.30px;width:12.20px;height:10.00px;background:#191b1c;"></div>
<div class="a t" style="left:991.50px;top:129.66px;font-size:7.6px;color:#f1f1f1;font-weight:bold;">1</div>
<div class="a t" style="left:1003.50px;top:129.66px;font-size:7.6px;color:#e8eaed;">/</div>
<div class="a t" style="left:1009.80px;top:129.66px;font-size:7.6px;color:#e8eaed;">2</div>
<div class="a" style="left:1026.30px;top:129.00px;width:0.80px;height:8.00px;background:#5f6368;"></div>
<div class="a" style="left:1034.70px;top:132.00px;width:6.80px;height:1.20px;background:#e8eaed;"></div>
<div class="a" style="left:1049.90px;top:127.30px;width:23.40px;height:10.00px;background:#191b1c;"></div>
<div class="a t" style="left:1053.30px;top:129.92px;font-size:7.3px;color:#f1f1f1;font-weight:bold;letter-spacing:-0.2px">73%</div>
<svg class="a" style="left:1081.5px;top:128.5px" width="8" height="8" viewBox="0 0 8 8"><path d="M0 4 H7 M3.5 0.5 V7.5" stroke="#e8eaed" stroke-width="1.1"/></svg>
<div class="a" style="left:1096.30px;top:129.00px;width:0.80px;height:8.00px;background:#5f6368;"></div>
<svg class="a" style="left:1106.5px;top:128.5px" width="11" height="9" viewBox="0 0 11 9"><rect x="0.6" y="0.6" width="9.8" height="7.8" rx="0.8" fill="none" stroke="#e8eaed" stroke-width="1.1"/><path d="M5.5 1.8 V7.2 M4 3 L5.5 1.8 L7 3 M4 6 L5.5 7.2 L7 6" stroke="#e8eaed" stroke-width="0.9" fill="none"/></svg>
<svg class="a" style="left:1125.5px;top:127.5px" width="11" height="11" viewBox="0 0 11 11"><path d="M3.2 2.6 A4.1 4.1 0 1 1 2.2 7.2" fill="none" stroke="#e8eaed" stroke-width="1.1"/><path d="M1.3 5.5 L3.8 3 L6.3 5.5 L3.8 8 Z" fill="none" stroke="#e8eaed" stroke-width="1"/></svg>
<svg class="a" style="left:1230px;top:128px" width="9" height="9" viewBox="0 0 9 9"><path d="M4.5 0.5 V5.5 M2 3.5 L4.5 6 L7 3.5" stroke="#e8eaed" stroke-width="1.3" fill="none"/><path d="M0.8 8 H8.2" stroke="#e8eaed" stroke-width="1.2"/></svg>
<svg class="a" style="left:1250px;top:128px" width="10" height="9" viewBox="0 0 10 9"><rect x="2.5" y="0.3" width="5" height="2" fill="#e8eaed"/><rect x="0.3" y="2.6" width="9.4" height="4.2" rx="1" fill="#e8eaed"/><rect x="2.5" y="5.5" width="5" height="3.2" fill="#e8eaed"/><rect x="3.2" y="6" width="3.6" height="2" fill="#323639"/></svg>
<svg class="a" style="left:1274.5px;top:128px" width="3" height="9" viewBox="0 0 3 9"><circle cx="1.5" cy="1.2" r="0.9" fill="#e8eaed"/><circle cx="1.5" cy="4.5" r="0.9" fill="#e8eaed"/><circle cx="1.5" cy="7.8" r="0.9" fill="#e8eaed"/></svg>
<div class="a" style="left:835.50px;top:153.00px;width:2.50px;height:19.00px;background:#8ab4f8;border-radius:0 1.5px 1.5px 0"></div>
<svg class="a" style="left:848.5px;top:157.5px" width="9" height="10" viewBox="0 0 9 10"><rect x="0.6" y="0.6" width="7.8" height="8.6" rx="1.2" fill="none" stroke="#8ab4f8" stroke-width="1.1"/><rect x="1.8" y="2" width="5.4" height="2" fill="#1f2224"/><path d="M1.5 8 L3.3 5.8 L4.5 7 L5.8 5.6 L7.5 8 Z" fill="#8ab4f8"/></svg>
<svg class="a" style="left:848.5px;top:189px" width="9" height="9" viewBox="0 0 9 9"><rect x="0.6" y="0.6" width="7.8" height="7.8" rx="0.8" fill="none" stroke="#e8eaed" stroke-width="1.1"/><path d="M4.5 0.6 V8.4 M0.6 3.1 H8.4 M0.6 5.8 H8.4" stroke="#e8eaed" stroke-width="0.9"/></svg>
<div class="a" style="left:891.40px;top:156.00px;width:62.50px;height:85.20px;background:#8ab4f8;"></div>
<div class="a" style="left:894.00px;top:158.60px;width:57.30px;height:80.00px;background:#fff;"></div>
<div class="a t" style="left:920.00px;top:245.79px;font-size:6.5px;color:#e8eaed;font-weight:bold;">1</div>
<div class="a" style="left:894.40px;top:263.50px;width:56.60px;height:79.30px;background:#9b9b9b;"></div>
<div class="a t" style="left:920.00px;top:349.79px;font-size:6.5px;color:#e8eaed;font-weight:bold;">2</div>
<div class="a" style="left:896.00px;top:265.50px;width:2.30px;height:2.10px;background:rgb(133,133,135);"></div><div class="a" style="left:898.00px;top:265.50px;width:2.30px;height:2.10px;background:rgb(148,148,150);"></div><div class="a" style="left:906.00px;top:265.50px;width:2.30px;height:2.10px;background:rgb(144,144,146);"></div><div class="a" style="left:906.00px;top:267.30px;width:2.30px;height:2.10px;background:rgb(131,131,133);"></div><div class="a" style="left:898.00px;top:269.10px;width:2.30px;height:2.10px;background:rgb(142,142,144);"></div><div class="a" style="left:902.00px;top:269.10px;width:2.30px;height:2.10px;background:rgb(145,145,147);"></div><div class="a" style="left:904.00px;top:269.10px;width:2.30px;height:2.10px;background:rgb(147,147,149);"></div><div class="a" style="left:896.00px;top:270.90px;width:2.30px;height:2.10px;background:rgb(143,143,145);"></div><div class="a" style="left:900.00px;top:270.90px;width:2.30px;height:2.10px;background:rgb(142,142,144);"></div><div class="a" style="left:902.00px;top:270.90px;width:2.30px;height:2.10px;background:rgb(148,148,150);"></div><div class="a" style="left:896.00px;top:272.70px;width:2.30px;height:2.10px;background:rgb(134,134,136);"></div><div class="a" style="left:902.00px;top:272.70px;width:2.30px;height:2.10px;background:rgb(147,147,149);"></div><div class="a" style="left:906.00px;top:272.70px;width:2.30px;height:2.10px;background:rgb(131,131,133);"></div>
<div class="a" style="left:913.50px;top:265.50px;width:4.00px;height:0.80px;background:#6a6a6a;"></div>
<div class="a" style="left:915.20px;top:269.00px;width:1.80px;height:1.74px;background:rgb(107,107,109);"></div><div class="a" style="left:916.70px;top:269.00px;width:1.80px;height:1.74px;background:rgb(128,128,130);"></div><div class="a" style="left:921.20px;top:269.00px;width:1.80px;height:1.74px;background:rgb(113,113,115);"></div><div class="a" style="left:922.70px;top:269.00px;width:1.80px;height:1.74px;background:rgb(104,104,106);"></div><div class="a" style="left:913.70px;top:270.44px;width:1.80px;height:1.74px;background:rgb(103,103,105);"></div><div class="a" style="left:918.20px;top:270.44px;width:1.80px;height:1.74px;background:rgb(121,121,123);"></div><div class="a" style="left:921.20px;top:270.44px;width:1.80px;height:1.74px;background:rgb(131,131,133);"></div><div class="a" style="left:924.20px;top:270.44px;width:1.80px;height:1.74px;background:rgb(101,101,103);"></div><div class="a" style="left:915.20px;top:271.89px;width:1.80px;height:1.74px;background:rgb(99,99,101);"></div><div class="a" style="left:916.70px;top:271.89px;width:1.80px;height:1.74px;background:rgb(133,133,135);"></div><div class="a" style="left:913.70px;top:273.33px;width:1.80px;height:1.74px;background:rgb(119,119,121);"></div><div class="a" style="left:922.70px;top:273.33px;width:1.80px;height:1.74px;background:rgb(105,105,107);"></div><div class="a" style="left:924.20px;top:273.33px;width:1.80px;height:1.74px;background:rgb(98,98,100);"></div><div class="a" style="left:913.70px;top:274.78px;width:1.80px;height:1.74px;background:rgb(99,99,101);"></div><div class="a" style="left:915.20px;top:274.78px;width:1.80px;height:1.74px;background:rgb(123,123,125);"></div><div class="a" style="left:916.70px;top:274.78px;width:1.80px;height:1.74px;background:rgb(111,111,113);"></div><div class="a" style="left:918.20px;top:274.78px;width:1.80px;height:1.74px;background:rgb(107,107,109);"></div><div class="a" style="left:924.20px;top:274.78px;width:1.80px;height:1.74px;background:rgb(127,127,129);"></div><div class="a" style="left:913.70px;top:276.22px;width:1.80px;height:1.74px;background:rgb(112,112,114);"></div><div class="a" style="left:924.20px;top:276.22px;width:1.80px;height:1.74px;background:rgb(96,96,98);"></div><div class="a" style="left:913.70px;top:277.67px;width:1.80px;height:1.74px;background:rgb(107,107,109);"></div><div class="a" style="left:915.20px;top:277.67px;width:1.80px;height:1.74px;background:rgb(137,137,139);"></div><div class="a" style="left:918.20px;top:277.67px;width:1.80px;height:1.74px;background:rgb(124,124,126);"></div><div class="a" style="left:919.70px;top:277.67px;width:1.80px;height:1.74px;background:rgb(136,136,138);"></div><div class="a" style="left:921.20px;top:277.67px;width:1.80px;height:1.74px;background:rgb(106,106,108);"></div><div class="a" style="left:922.70px;top:277.67px;width:1.80px;height:1.74px;background:rgb(120,120,122);"></div><div class="a" style="left:924.20px;top:277.67px;width:1.80px;height:1.74px;background:rgb(121,121,123);"></div><div class="a" style="left:915.20px;top:279.11px;width:1.80px;height:1.74px;background:rgb(104,104,106);"></div><div class="a" style="left:919.70px;top:279.11px;width:1.80px;height:1.74px;background:rgb(97,97,99);"></div><div class="a" style="left:921.20px;top:279.11px;width:1.80px;height:1.74px;background:rgb(123,123,125);"></div><div class="a" style="left:924.20px;top:279.11px;width:1.80px;height:1.74px;background:rgb(97,97,99);"></div><div class="a" style="left:913.70px;top:280.56px;width:1.80px;height:1.74px;background:rgb(139,139,141);"></div><div class="a" style="left:919.70px;top:280.56px;width:1.80px;height:1.74px;background:rgb(127,127,129);"></div><div class="a" style="left:924.20px;top:280.56px;width:1.80px;height:1.74px;background:rgb(123,123,125);"></div>
<div class="a" style="left:927.00px;top:265.50px;width:2.47px;height:1.90px;background:rgb(143,143,145);"></div><div class="a" style="left:929.17px;top:265.50px;width:2.47px;height:1.90px;background:rgb(138,138,140);"></div><div class="a" style="left:927.00px;top:267.10px;width:2.47px;height:1.90px;background:rgb(137,137,139);"></div><div class="a" style="left:929.17px;top:267.10px;width:2.47px;height:1.90px;background:rgb(146,146,148);"></div><div class="a" style="left:937.83px;top:267.10px;width:2.47px;height:1.90px;background:rgb(146,146,148);"></div><div class="a" style="left:929.17px;top:268.70px;width:2.47px;height:1.90px;background:rgb(130,130,132);"></div><div class="a" style="left:931.33px;top:270.30px;width:2.47px;height:1.90px;background:rgb(129,129,131);"></div><div class="a" style="left:933.50px;top:270.30px;width:2.47px;height:1.90px;background:rgb(148,148,150);"></div><div class="a" style="left:937.83px;top:270.30px;width:2.47px;height:1.90px;background:rgb(147,147,149);"></div><div class="a" style="left:929.17px;top:271.90px;width:2.47px;height:1.90px;background:rgb(146,146,148);"></div><div class="a" style="left:937.83px;top:271.90px;width:2.47px;height:1.90px;background:rgb(141,141,143);"></div>
<div class="a" style="left:901.62px;top:279.00px;width:2.17px;height:2.50px;background:rgb(132,132,134);"></div><div class="a" style="left:903.50px;top:279.00px;width:2.17px;height:2.50px;background:rgb(130,130,132);"></div><div class="a" style="left:905.38px;top:279.00px;width:2.17px;height:2.50px;background:rgb(131,131,133);"></div><div class="a" style="left:905.38px;top:281.20px;width:2.17px;height:2.50px;background:rgb(146,146,148);"></div><div class="a" style="left:909.12px;top:281.20px;width:2.17px;height:2.50px;background:rgb(129,129,131);"></div><div class="a" style="left:896.00px;top:283.40px;width:2.17px;height:2.50px;background:rgb(149,149,151);"></div><div class="a" style="left:897.88px;top:283.40px;width:2.17px;height:2.50px;background:rgb(141,141,143);"></div><div class="a" style="left:901.62px;top:283.40px;width:2.17px;height:2.50px;background:rgb(136,136,138);"></div><div class="a" style="left:907.25px;top:283.40px;width:2.17px;height:2.50px;background:rgb(133,133,135);"></div><div class="a" style="left:909.12px;top:283.40px;width:2.17px;height:2.50px;background:rgb(129,129,131);"></div><div class="a" style="left:901.62px;top:285.60px;width:2.17px;height:2.50px;background:rgb(143,143,145);"></div><div class="a" style="left:901.62px;top:287.80px;width:2.17px;height:2.50px;background:rgb(138,138,140);"></div>
<div class="a" style="left:898.00px;top:288.40px;width:2.50px;height:2.50px;background:#6a6a6a;"></div>
<div class="a" style="left:913.00px;top:285.00px;width:2.30px;height:1.97px;background:rgb(138,138,140);"></div><div class="a" style="left:915.00px;top:285.00px;width:2.30px;height:1.97px;background:rgb(135,135,137);"></div><div class="a" style="left:917.00px;top:285.00px;width:2.30px;height:1.97px;background:rgb(128,128,130);"></div><div class="a" style="left:919.00px;top:285.00px;width:2.30px;height:1.97px;background:rgb(130,130,132);"></div><div class="a" style="left:925.00px;top:285.00px;width:2.30px;height:1.97px;background:rgb(141,141,143);"></div><div class="a" style="left:913.00px;top:286.67px;width:2.30px;height:1.97px;background:rgb(145,145,147);"></div><div class="a" style="left:917.00px;top:286.67px;width:2.30px;height:1.97px;background:rgb(146,146,148);"></div><div class="a" style="left:921.00px;top:286.67px;width:2.30px;height:1.97px;background:rgb(136,136,138);"></div><div class="a" style="left:913.00px;top:288.33px;width:2.30px;height:1.97px;background:rgb(133,133,135);"></div><div class="a" style="left:919.00px;top:288.33px;width:2.30px;height:1.97px;background:rgb(129,129,131);"></div>
<div class="a" style="left:991.00px;top:147.50px;width:1.70px;height:448.00px;background:#2a2d2f;"></div>
<div class="a" style="left:992.70px;top:148.20px;width:298.70px;height:422.40px;background:#fff;"></div>
<div class="a" style="left:992.70px;top:576.90px;width:298.70px;height:18.60px;background:#fff;"></div>
<div class="a" style="left:1291.40px;top:147.50px;width:1.70px;height:448.00px;background:#2a2d2f;"></div>
<div class="a t" style="left:835.60px;top:108.69px;font-size:6.5px;color:#222;font-weight:bold;">Rechnung</div>
<svg class="a" style="left:1020px;top:160px" width="80" height="40" viewBox="0 0 1290 645"><path d="M160 480 V130 L330 270 L495 130 V480 H420 V290 L330 360 L235 290 V480 Z" fill="#d09a5c"/><path d="M830 145 H640 Q540 145 540 235 V250 Q540 330 640 330 H740 Q760 330 760 350 V380 Q760 400 740 400 H425 V480 H750 Q835 480 835 400 V330 Q835 260 750 260 H640 Q615 260 615 240 V235 Q615 225 640 225 H830 Z" fill="#d09a5c"/></svg>
<div class="a t" style="left:1029.50px;top:193.67px;font-size:2.75px;color:#222;font-weight:bold;-webkit-text-stroke:0;letter-spacing:0.05px">ALLROUND HALJENAHMERKER SERVICE</div>
<div class="a" style="left:1030.10px;top:230.50px;width:5.00px;height:5.00px;background:#a0a0a0;"></div>
<div class="a" style="left:1035.10px;top:230.50px;width:5.00px;height:5.00px;background:#eaeaea;"></div>
<div class="a" style="left:1040.10px;top:230.50px;width:5.00px;height:5.00px;background:#888;"></div>
<div class="a" style="left:1050.10px;top:230.50px;width:5.00px;height:5.00px;background:#888;"></div>
<div class="a" style="left:1060.10px;top:230.50px;width:5.00px;height:5.00px;background:#444;"></div>
<div class="a" style="left:1065.10px;top:230.50px;width:5.00px;height:5.00px;background:#d0d0d0;"></div>
<div class="a" style="left:1070.10px;top:230.50px;width:5.00px;height:5.00px;background:#f5f5f5;"></div>
<div class="a" style="left:1075.10px;top:230.50px;width:5.00px;height:5.00px;background:#d5d5d5;"></div>
<div class="a" style="left:1045.10px;top:235.50px;width:5.00px;height:5.00px;background:#c8c8c8;"></div>
<div class="a" style="left:1050.10px;top:235.50px;width:5.00px;height:5.00px;background:#cfcfcf;"></div>
<div class="a" style="left:1065.10px;top:235.50px;width:5.00px;height:5.00px;background:#cdcdcd;"></div>
<div class="a" style="left:1080.10px;top:235.50px;width:5.00px;height:5.00px;background:#999;"></div>
<div class="a" style="left:1095.10px;top:235.50px;width:5.00px;height:5.00px;background:#eee;"></div>
<div class="a" style="left:1030.10px;top:246.00px;width:5.00px;height:5.00px;background:#888;"></div>
<div class="a" style="left:1035.10px;top:246.00px;width:5.00px;height:5.00px;background:#8a8a8a;"></div>
<div class="a" style="left:1040.10px;top:246.00px;width:5.00px;height:5.00px;background:#bbb;"></div>
<div class="a" style="left:1045.10px;top:246.00px;width:5.00px;height:5.00px;background:#a0a0a0;"></div>
<div class="a" style="left:1050.10px;top:246.00px;width:5.00px;height:5.00px;background:#aaa;"></div>
<div class="a" style="left:1055.10px;top:246.00px;width:5.00px;height:5.00px;background:#cfcfcf;"></div>
<div class="a" style="left:1030.10px;top:251.00px;width:5.00px;height:5.00px;background:#888;"></div>
<div class="a" style="left:1040.10px;top:251.00px;width:5.00px;height:5.00px;background:#c8c8c8;"></div>
<div class="a" style="left:1045.10px;top:251.00px;width:5.00px;height:5.00px;background:#aaa;"></div>
<svg class="a" style="left:1180px;top:220px" width="90" height="40" viewBox="0 0 1321 587"><g fill="none" stroke="#5a64c0" stroke-width="13" stroke-linecap="round" stroke-linejoin="round"><path d="M250 300 L255 430 L355 420"/><path d="M390 410 Q370 280 420 285 Q480 290 490 400"/><path d="M650 280 Q700 240 710 290 Q700 330 680 335 Q725 345 710 400 Q680 430 645 400"/><path d="M705 300 L760 250 L765 380"/><path d="M800 260 Q760 270 770 340 Q790 390 830 350 Q860 280 800 260"/><path d="M880 250 L910 225 L915 390"/><path d="M990 240 Q950 250 965 300 Q1020 330 1005 370 Q985 390 970 360 Q965 320 1000 290 Q1020 250 990 240"/></g></svg>
<div class="a t" style="left:1028.60px;top:296.91px;font-size:6.6px;color:#000;letter-spacing:-0.12px;-webkit-text-stroke:0.15px #000">Rechnung Nr. 1-055 &ndash; Entfernung Schmutzschleuse</div>
<div class="a" style="left:1028.60px;top:307.00px;width:232.40px;height:0.70px;background:#a8a8a8;"></div>
<div class="a t" style="left:1028.60px;top:316.73px;font-size:4.45px;color:#222;-webkit-text-stroke:0;">Liegenschaft:</div>
<div class="a t" style="left:1068.40px;top:316.69px;font-size:4.5px;color:#222;-webkit-text-stroke:0;">Mühlestrasse 48, 2504 Biel/Bienne</div>
<div class="a t" style="left:1028.60px;top:322.93px;font-size:4.45px;color:#222;-webkit-text-stroke:0;">Eigentümer:</div>
<div class="a t" style="left:1068.40px;top:322.89px;font-size:4.5px;color:#222;-webkit-text-stroke:0;">Alenas Investments SA</div>
<div class="a t" style="left:1216.00px;top:328.75px;font-size:3.6px;color:#222;-webkit-text-stroke:0;">Moosseedorf, 20.06.2023</div>
<div class="a" style="left:1028.60px;top:333.40px;width:232.40px;height:0.70px;background:#a8a8a8;"></div>
<div class="a t" style="left:1028.60px;top:343.99px;font-size:4.5px;color:#222;-webkit-text-stroke:0;">Sehr geehrte Damen und Herren,</div>
<div class="a t" style="left:1028.60px;top:354.49px;font-size:4.5px;color:#222;-webkit-text-stroke:0;width:232.4000000000001px;text-align:justify;text-align-last:justify;">Wir danken Ihnen für Ihr Vertrauen in Bezug auf den Auftrag gemäss Offerte Nr. 22029 für die Entfernung der</div><div class="a t" style="left:1028.60px;top:360.99px;font-size:4.5px;color:#222;-webkit-text-stroke:0;width:232.4000000000001px;text-align:justify;text-align-last:justify;">Schmutzschleuse am Haupteingang der Liegenschaft. Für unsere Leistungen erlauben wir uns Ihnen folgenden</div><div class="a t" style="left:1028.60px;top:367.49px;font-size:4.5px;color:#222;-webkit-text-stroke:0;">Betrag in Rechnung zu stellen:</div>
<div class="a t" style="left:1050.00px;top:380.86px;font-size:4.06px;color:#111;font-weight:bold;-webkit-text-stroke:0;">Beschreibung Auftragsausführung</div>
<div class="a t" style="left:1050.00px;top:386.63px;font-size:4.1px;color:#222;-webkit-text-stroke:0;">Demontage / Entfernung der bestehenden Schmutzschleuse</div><div class="a t" style="left:1050.00px;top:392.63px;font-size:4.1px;color:#222;-webkit-text-stroke:0;">Entsorgung des Teppichs</div><div class="a t" style="left:1050.00px;top:398.63px;font-size:4.1px;color:#222;-webkit-text-stroke:0;">Entfernung der Kleberückstände unterhalb sowie Reinigung des Bodens mit Spezialmittel</div><div class="a t" style="left:1050.00px;top:408.13px;font-size:4.1px;color:#222;-webkit-text-stroke:0;">Pauschale für Fahrzeug PW</div><div class="a t" style="left:1050.00px;top:416.63px;font-size:4.1px;color:#222;-webkit-text-stroke:0;">Hoher Arbeitsaufwand von 2 Personen aufgrund stark verklebtem Untergrund</div>
<div class="a" style="left:1028.60px;top:426.70px;width:232.40px;height:0.70px;background:#777;"></div>
<div class="a t" style="left:1028.60px;top:430.74px;font-size:4.2px;color:#111;font-weight:bold;-webkit-text-stroke:0;">Gesamtbetrag</div>
<div class="a t" style="left:1221.00px;top:430.66px;font-size:4.3px;color:#111;-webkit-text-stroke:0;">CHF</div>
<div class="a t" style="left:1247.00px;top:430.66px;font-size:4.3px;color:#111;-webkit-text-stroke:0;">450.00</div>
<div class="a" style="left:1221.00px;top:434.50px;width:40.00px;height:0.60px;background:#555;"></div>
<div class="a t" style="left:1028.60px;top:444.49px;font-size:4.5px;color:#222;-webkit-text-stroke:0;width:232.4000000000001px;text-align:justify;text-align-last:justify;">Wir bitten Sie den Betrag mit beiliegendem Einzahlungsschein innert 30 Tagen zu begleichen und danken Ihnen im</div><div class="a t" style="left:1028.60px;top:451.49px;font-size:4.5px;color:#222;-webkit-text-stroke:0;width:232.4000000000001px;text-align:justify;text-align-last:justify;">Voraus. Weiter danken wir für die gute Zusammenarbeit und freuen uns auf eventuelle künftige Aufträge. Für</div><div class="a t" style="left:1028.60px;top:458.49px;font-size:4.5px;color:#222;-webkit-text-stroke:0;">Beratungen oder Fragen stehen wir gerne jederzeit zu Ihrer Verfügung.</div>
<div class="a t" style="left:1028.60px;top:471.33px;font-size:4.45px;color:#222;-webkit-text-stroke:0;">Freundliche Grüsse</div>
<div class="a" style="left:1035.10px;top:474.80px;width:5.10px;height:5.00px;background:#909090;"></div>
<div class="a" style="left:1040.20px;top:479.80px;width:5.10px;height:5.00px;background:#888;"></div>
<div class="a" style="left:1035.10px;top:484.80px;width:5.10px;height:5.00px;background:#aaa;"></div>
<div class="a" style="left:1030.00px;top:489.80px;width:5.10px;height:5.00px;background:#aaa;"></div>
<div class="a" style="left:1035.10px;top:489.80px;width:5.10px;height:5.00px;background:#777;"></div>
<div class="a" style="left:1040.20px;top:489.80px;width:5.10px;height:5.00px;background:#aaa;"></div>
<div class="a" style="left:1045.30px;top:489.80px;width:5.10px;height:5.00px;background:#bbb;"></div>
<div class="a" style="left:1030.00px;top:494.80px;width:5.10px;height:5.00px;background:#ccc;"></div>
<div class="a" style="left:1035.10px;top:494.80px;width:5.10px;height:5.00px;background:#ccc;"></div>
<div class="a" style="left:1040.20px;top:494.80px;width:5.10px;height:5.00px;background:#e8e8e8;"></div>
<div class="a" style="left:1045.30px;top:494.80px;width:5.10px;height:5.00px;background:#bbb;"></div>
<div class="a" style="left:1050.40px;top:494.80px;width:5.10px;height:5.00px;background:#ccc;"></div>
<div class="a" style="left:1060.60px;top:494.80px;width:5.10px;height:5.00px;background:#f5f5f5;"></div>
<div class="a" style="left:1065.70px;top:494.80px;width:5.10px;height:5.00px;background:#ddd;"></div>
<div class="a" style="left:1075.90px;top:494.80px;width:5.10px;height:5.00px;background:#bbb;"></div>
<div class="a" style="left:1081.00px;top:494.80px;width:5.10px;height:5.00px;background:#999;"></div>
<div class="a" style="left:1091.20px;top:494.80px;width:5.10px;height:5.00px;background:#bbb;"></div>
<div class="a" style="left:1096.30px;top:494.80px;width:5.10px;height:5.00px;background:#bbb;"></div>
<div class="a" style="left:1101.40px;top:494.80px;width:5.10px;height:5.00px;background:#bbb;"></div>
<div class="a" style="left:1106.50px;top:494.80px;width:5.10px;height:5.00px;background:#bbb;"></div>
<div class="a" style="left:1111.60px;top:494.80px;width:5.10px;height:5.00px;background:#e6e6e6;"></div>
<div class="a" style="left:1116.70px;top:494.80px;width:5.10px;height:5.00px;background:#ddd;"></div>
<div class="a" style="left:1030.41px;top:541.40px;width:4.93px;height:5.30px;background:#bbb;"></div>
<div class="a" style="left:1039.87px;top:541.40px;width:5.40px;height:5.30px;background:#aaa;"></div>
<div class="a" style="left:1045.08px;top:541.40px;width:5.40px;height:5.30px;background:#a0a0a0;"></div>
<div class="a" style="left:1050.28px;top:541.40px;width:5.40px;height:5.30px;background:#999;"></div>
<div class="a" style="left:1055.48px;top:541.40px;width:5.40px;height:5.30px;background:#aaa;"></div>
<div class="a" style="left:1066.37px;top:541.40px;width:5.40px;height:5.30px;background:#bbb;"></div>
<div class="a" style="left:1071.57px;top:541.40px;width:5.40px;height:5.30px;background:#555;"></div>
<div class="a" style="left:1082.45px;top:541.40px;width:4.93px;height:5.30px;background:#aaa;"></div>
<div class="a" style="left:1091.92px;top:541.40px;width:5.40px;height:5.30px;background:#aaa;"></div>
<div class="a" style="left:1097.12px;top:541.40px;width:5.40px;height:5.30px;background:#999;"></div>
<div class="a" style="left:1102.32px;top:541.40px;width:5.40px;height:5.30px;background:#777;"></div>
<div class="a" style="left:1107.53px;top:541.40px;width:5.40px;height:5.30px;background:#aaa;"></div>
<div class="a" style="left:1112.73px;top:541.40px;width:5.40px;height:5.30px;background:#888;"></div>
<div class="a" style="left:1117.94px;top:541.40px;width:5.40px;height:5.30px;background:#888;"></div>
<div class="a" style="left:1123.14px;top:541.40px;width:5.40px;height:5.30px;background:#999;"></div>
<div class="a" style="left:1128.35px;top:541.40px;width:5.40px;height:5.30px;background:#aaa;"></div>
<div class="a" style="left:1143.96px;top:541.40px;width:5.40px;height:5.30px;background:#555;"></div>
<div class="a" style="left:1149.16px;top:541.40px;width:5.40px;height:5.30px;background:#aaa;"></div>
<div class="a" style="left:1154.37px;top:541.40px;width:5.40px;height:5.30px;background:#ccc;"></div>
<div class="a" style="left:1159.57px;top:541.40px;width:5.40px;height:5.30px;background:#ddd;"></div>
<div class="a" style="left:1164.78px;top:541.40px;width:5.40px;height:5.30px;background:#888;"></div>
<div class="a" style="left:1169.98px;top:541.40px;width:5.40px;height:5.30px;background:#aaa;"></div>
<div class="a" style="left:1179.92px;top:541.40px;width:5.88px;height:5.30px;background:#ddd;"></div>
<div class="a" style="left:1200.73px;top:541.40px;width:5.40px;height:5.30px;background:#e0e0e0;"></div>
<div class="a" style="left:1205.94px;top:541.40px;width:5.40px;height:5.30px;background:#ccc;"></div>
<div class="a" style="left:1221.55px;top:541.40px;width:5.40px;height:5.30px;background:#aaa;"></div>
<div class="a" style="left:1226.76px;top:541.40px;width:5.40px;height:5.30px;background:#999;"></div>
<div class="a" style="left:1242.37px;top:541.40px;width:4.93px;height:5.30px;background:#999;"></div>
<div class="a" style="left:1030.41px;top:546.70px;width:4.80px;height:5.00px;background:#ccc;"></div>
<div class="a" style="left:1045.55px;top:546.70px;width:4.80px;height:5.00px;background:#ccc;"></div>
<div class="a" style="left:1076.78px;top:546.70px;width:20.80px;height:5.00px;background:#eee;"></div>
<div class="a" style="left:0;top:0;width:1321px;height:645px;transform-origin:992.7px 148.2px;transform:translate(-98.7px,10.4px) scale(0.1918,0.1894);overflow:visible"><svg class="a" style="left:1020px;top:160px" width="80" height="40" viewBox="0 0 1290 645"><path d="M160 480 V130 L330 270 L495 130 V480 H420 V290 L330 360 L235 290 V480 Z" fill="#d09a5c"/><path d="M830 145 H640 Q540 145 540 235 V250 Q540 330 640 330 H740 Q760 330 760 350 V380 Q760 400 740 400 H425 V480 H750 Q835 480 835 400 V330 Q835 260 750 260 H640 Q615 260 615 240 V235 Q615 225 640 225 H830 Z" fill="#d09a5c"/></svg>
<div class="a t" style="left:1029.50px;top:193.67px;font-size:2.75px;color:#222;font-weight:bold;-webkit-text-stroke:0;letter-spacing:0.05px">ALLROUND HALJENAHMERKER SERVICE</div>
<div class="a" style="left:1030.10px;top:230.50px;width:5.00px;height:5.00px;background:#a0a0a0;"></div>
<div class="a" style="left:1035.10px;top:230.50px;width:5.00px;height:5.00px;background:#eaeaea;"></div>
<div class="a" style="left:1040.10px;top:230.50px;width:5.00px;height:5.00px;background:#888;"></div>
<div class="a" style="left:1050.10px;top:230.50px;width:5.00px;height:5.00px;background:#888;"></div>
<div class="a" style="left:1060.10px;top:230.50px;width:5.00px;height:5.00px;background:#444;"></div>
<div class="a" style="left:1065.10px;top:230.50px;width:5.00px;height:5.00px;background:#d0d0d0;"></div>
<div class="a" style="left:1070.10px;top:230.50px;width:5.00px;height:5.00px;background:#f5f5f5;"></div>
<div class="a" style="left:1075.10px;top:230.50px;width:5.00px;height:5.00px;background:#d5d5d5;"></div>
<div class="a" style="left:1045.10px;top:235.50px;width:5.00px;height:5.00px;background:#c8c8c8;"></div>
<div class="a" style="left:1050.10px;top:235.50px;width:5.00px;height:5.00px;background:#cfcfcf;"></div>
<div class="a" style="left:1065.10px;top:235.50px;width:5.00px;height:5.00px;background:#cdcdcd;"></div>
<div class="a" style="left:1080.10px;top:235.50px;width:5.00px;height:5.00px;background:#999;"></div>
<div class="a" style="left:1095.10px;top:235.50px;width:5.00px;height:5.00px;background:#eee;"></div>
<div class="a" style="left:1030.10px;top:246.00px;width:5.00px;height:5.00px;background:#888;"></div>
<div class="a" style="left:1035.10px;top:246.00px;width:5.00px;height:5.00px;background:#8a8a8a;"></div>
<div class="a" style="left:1040.10px;top:246.00px;width:5.00px;height:5.00px;background:#bbb;"></div>
<div class="a" style="left:1045.10px;top:246.00px;width:5.00px;height:5.00px;background:#a0a0a0;"></div>
<div class="a" style="left:1050.10px;top:246.00px;width:5.00px;height:5.00px;background:#aaa;"></div>
<div class="a" style="left:1055.10px;top:246.00px;width:5.00px;height:5.00px;background:#cfcfcf;"></div>
<div class="a" style="left:1030.10px;top:251.00px;width:5.00px;height:5.00px;background:#888;"></div>
<div class="a" style="left:1040.10px;top:251.00px;width:5.00px;height:5.00px;background:#c8c8c8;"></div>
<div class="a" style="left:1045.10px;top:251.00px;width:5.00px;height:5.00px;background:#aaa;"></div>
<svg class="a" style="left:1180px;top:220px" width="90" height="40" viewBox="0 0 1321 587"><g fill="none" stroke="#5a64c0" stroke-width="13" stroke-linecap="round" stroke-linejoin="round"><path d="M250 300 L255 430 L355 420"/><path d="M390 410 Q370 280 420 285 Q480 290 490 400"/><path d="M650 280 Q700 240 710 290 Q700 330 680 335 Q725 345 710 400 Q680 430 645 400"/><path d="M705 300 L760 250 L765 380"/><path d="M800 260 Q760 270 770 340 Q790 390 830 350 Q860 280 800 260"/><path d="M880 250 L910 225 L915 390"/><path d="M990 240 Q950 250 965 300 Q1020 330 1005 370 Q985 390 970 360 Q965 320 1000 290 Q1020 250 990 240"/></g></svg>
<div class="a t" style="left:1028.60px;top:296.91px;font-size:6.6px;color:#000;letter-spacing:-0.12px;-webkit-text-stroke:0.15px #000">Rechnung Nr. 1-055 &ndash; Entfernung Schmutzschleuse</div>
<div class="a" style="left:1028.60px;top:307.00px;width:232.40px;height:0.70px;background:#a8a8a8;"></div>
<div class="a t" style="left:1028.60px;top:316.73px;font-size:4.45px;color:#222;-webkit-text-stroke:0;">Liegenschaft:</div>
<div class="a t" style="left:1068.40px;top:316.69px;font-size:4.5px;color:#222;-webkit-text-stroke:0;">Mühlestrasse 48, 2504 Biel/Bienne</div>
<div class="a t" style="left:1028.60px;top:322.93px;font-size:4.45px;color:#222;-webkit-text-stroke:0;">Eigentümer:</div>
<div class="a t" style="left:1068.40px;top:322.89px;font-size:4.5px;color:#222;-webkit-text-stroke:0;">Alenas Investments SA</div>
<div class="a t" style="left:1216.00px;top:328.75px;font-size:3.6px;color:#222;-webkit-text-stroke:0;">Moosseedorf, 20.06.2023</div>
<div class="a" style="left:1028.60px;top:333.40px;width:232.40px;height:0.70px;background:#a8a8a8;"></div>
<div class="a t" style="left:1028.60px;top:343.99px;font-size:4.5px;color:#222;-webkit-text-stroke:0;">Sehr geehrte Damen und Herren,</div>
<div class="a t" style="left:1028.60px;top:354.49px;font-size:4.5px;color:#222;-webkit-text-stroke:0;width:232.4000000000001px;text-align:justify;text-align-last:justify;">Wir danken Ihnen für Ihr Vertrauen in Bezug auf den Auftrag gemäss Offerte Nr. 22029 für die Entfernung der</div><div class="a t" style="left:1028.60px;top:360.99px;font-size:4.5px;color:#222;-webkit-text-stroke:0;width:232.4000000000001px;text-align:justify;text-align-last:justify;">Schmutzschleuse am Haupteingang der Liegenschaft. Für unsere Leistungen erlauben wir uns Ihnen folgenden</div><div class="a t" style="left:1028.60px;top:367.49px;font-size:4.5px;color:#222;-webkit-text-stroke:0;">Betrag in Rechnung zu stellen:</div>
<div class="a t" style="left:1050.00px;top:380.86px;font-size:4.06px;color:#111;font-weight:bold;-webkit-text-stroke:0;">Beschreibung Auftragsausführung</div>
<div class="a t" style="left:1050.00px;top:386.63px;font-size:4.1px;color:#222;-webkit-text-stroke:0;">Demontage / Entfernung der bestehenden Schmutzschleuse</div><div class="a t" style="left:1050.00px;top:392.63px;font-size:4.1px;color:#222;-webkit-text-stroke:0;">Entsorgung des Teppichs</div><div class="a t" style="left:1050.00px;top:398.63px;font-size:4.1px;color:#222;-webkit-text-stroke:0;">Entfernung der Kleberückstände unterhalb sowie Reinigung des Bodens mit Spezialmittel</div><div class="a t" style="left:1050.00px;top:408.13px;font-size:4.1px;color:#222;-webkit-text-stroke:0;">Pauschale für Fahrzeug PW</div><div class="a t" style="left:1050.00px;top:416.63px;font-size:4.1px;color:#222;-webkit-text-stroke:0;">Hoher Arbeitsaufwand von 2 Personen aufgrund stark verklebtem Untergrund</div>
<div class="a" style="left:1028.60px;top:426.70px;width:232.40px;height:0.70px;background:#777;"></div>
<div class="a t" style="left:1028.60px;top:430.74px;font-size:4.2px;color:#111;font-weight:bold;-webkit-text-stroke:0;">Gesamtbetrag</div>
<div class="a t" style="left:1221.00px;top:430.66px;font-size:4.3px;color:#111;-webkit-text-stroke:0;">CHF</div>
<div class="a t" style="left:1247.00px;top:430.66px;font-size:4.3px;color:#111;-webkit-text-stroke:0;">450.00</div>
<div class="a" style="left:1221.00px;top:434.50px;width:40.00px;height:0.60px;background:#555;"></div>
<div class="a t" style="left:1028.60px;top:444.49px;font-size:4.5px;color:#222;-webkit-text-stroke:0;width:232.4000000000001px;text-align:justify;text-align-last:justify;">Wir bitten Sie den Betrag mit beiliegendem Einzahlungsschein innert 30 Tagen zu begleichen und danken Ihnen im</div><div class="a t" style="left:1028.60px;top:451.49px;font-size:4.5px;color:#222;-webkit-text-stroke:0;width:232.4000000000001px;text-align:justify;text-align-last:justify;">Voraus. Weiter danken wir für die gute Zusammenarbeit und freuen uns auf eventuelle künftige Aufträge. Für</div><div class="a t" style="left:1028.60px;top:458.49px;font-size:4.5px;color:#222;-webkit-text-stroke:0;">Beratungen oder Fragen stehen wir gerne jederzeit zu Ihrer Verfügung.</div>
<div class="a t" style="left:1028.60px;top:471.33px;font-size:4.45px;color:#222;-webkit-text-stroke:0;">Freundliche Grüsse</div>
<div class="a" style="left:1035.10px;top:474.80px;width:5.10px;height:5.00px;background:#909090;"></div>
<div class="a" style="left:1040.20px;top:479.80px;width:5.10px;height:5.00px;background:#888;"></div>
<div class="a" style="left:1035.10px;top:484.80px;width:5.10px;height:5.00px;background:#aaa;"></div>
<div class="a" style="left:1030.00px;top:489.80px;width:5.10px;height:5.00px;background:#aaa;"></div>
<div class="a" style="left:1035.10px;top:489.80px;width:5.10px;height:5.00px;background:#777;"></div>
<div class="a" style="left:1040.20px;top:489.80px;width:5.10px;height:5.00px;background:#aaa;"></div>
<div class="a" style="left:1045.30px;top:489.80px;width:5.10px;height:5.00px;background:#bbb;"></div>
<div class="a" style="left:1030.00px;top:494.80px;width:5.10px;height:5.00px;background:#ccc;"></div>
<div class="a" style="left:1035.10px;top:494.80px;width:5.10px;height:5.00px;background:#ccc;"></div>
<div class="a" style="left:1040.20px;top:494.80px;width:5.10px;height:5.00px;background:#e8e8e8;"></div>
<div class="a" style="left:1045.30px;top:494.80px;width:5.10px;height:5.00px;background:#bbb;"></div>
<div class="a" style="left:1050.40px;top:494.80px;width:5.10px;height:5.00px;background:#ccc;"></div>
<div class="a" style="left:1060.60px;top:494.80px;width:5.10px;height:5.00px;background:#f5f5f5;"></div>
<div class="a" style="left:1065.70px;top:494.80px;width:5.10px;height:5.00px;background:#ddd;"></div>
<div class="a" style="left:1075.90px;top:494.80px;width:5.10px;height:5.00px;background:#bbb;"></div>
<div class="a" style="left:1081.00px;top:494.80px;width:5.10px;height:5.00px;background:#999;"></div>
<div class="a" style="left:1091.20px;top:494.80px;width:5.10px;height:5.00px;background:#bbb;"></div>
<div class="a" style="left:1096.30px;top:494.80px;width:5.10px;height:5.00px;background:#bbb;"></div>
<div class="a" style="left:1101.40px;top:494.80px;width:5.10px;height:5.00px;background:#bbb;"></div>
<div class="a" style="left:1106.50px;top:494.80px;width:5.10px;height:5.00px;background:#bbb;"></div>
<div class="a" style="left:1111.60px;top:494.80px;width:5.10px;height:5.00px;background:#e6e6e6;"></div>
<div class="a" style="left:1116.70px;top:494.80px;width:5.10px;height:5.00px;background:#ddd;"></div>
<div class="a" style="left:1030.41px;top:541.40px;width:4.93px;height:5.30px;background:#bbb;"></div>
<div class="a" style="left:1039.87px;top:541.40px;width:5.40px;height:5.30px;background:#aaa;"></div>
<div class="a" style="left:1045.08px;top:541.40px;width:5.40px;height:5.30px;background:#a0a0a0;"></div>
<div class="a" style="left:1050.28px;top:541.40px;width:5.40px;height:5.30px;background:#999;"></div>
<div class="a" style="left:1055.48px;top:541.40px;width:5.40px;height:5.30px;background:#aaa;"></div>
<div class="a" style="left:1066.37px;top:541.40px;width:5.40px;height:5.30px;background:#bbb;"></div>
<div class="a" style="left:1071.57px;top:541.40px;width:5.40px;height:5.30px;background:#555;"></div>
<div class="a" style="left:1082.45px;top:541.40px;width:4.93px;height:5.30px;background:#aaa;"></div>
<div class="a" style="left:1091.92px;top:541.40px;width:5.40px;height:5.30px;background:#aaa;"></div>
<div class="a" style="left:1097.12px;top:541.40px;width:5.40px;height:5.30px;background:#999;"></div>
<div class="a" style="left:1102.32px;top:541.40px;width:5.40px;height:5.30px;background:#777;"></div>
<div class="a" style="left:1107.53px;top:541.40px;width:5.40px;height:5.30px;background:#aaa;"></div>
<div class="a" style="left:1112.73px;top:541.40px;width:5.40px;height:5.30px;background:#888;"></div>
<div class="a" style="left:1117.94px;top:541.40px;width:5.40px;height:5.30px;background:#888;"></div>
<div class="a" style="left:1123.14px;top:541.40px;width:5.40px;height:5.30px;background:#999;"></div>
<div class="a" style="left:1128.35px;top:541.40px;width:5.40px;height:5.30px;background:#aaa;"></div>
<div class="a" style="left:1143.96px;top:541.40px;width:5.40px;height:5.30px;background:#555;"></div>
<div class="a" style="left:1149.16px;top:541.40px;width:5.40px;height:5.30px;background:#aaa;"></div>
<div class="a" style="left:1154.37px;top:541.40px;width:5.40px;height:5.30px;background:#ccc;"></div>
<div class="a" style="left:1159.57px;top:541.40px;width:5.40px;height:5.30px;background:#ddd;"></div>
<div class="a" style="left:1164.78px;top:541.40px;width:5.40px;height:5.30px;background:#888;"></div>
<div class="a" style="left:1169.98px;top:541.40px;width:5.40px;height:5.30px;background:#aaa;"></div>
<div class="a" style="left:1179.92px;top:541.40px;width:5.88px;height:5.30px;background:#ddd;"></div>
<div class="a" style="left:1200.73px;top:541.40px;width:5.40px;height:5.30px;background:#e0e0e0;"></div>
<div class="a" style="left:1205.94px;top:541.40px;width:5.40px;height:5.30px;background:#ccc;"></div>
<div class="a" style="left:1221.55px;top:541.40px;width:5.40px;height:5.30px;background:#aaa;"></div>
<div class="a" style="left:1226.76px;top:541.40px;width:5.40px;height:5.30px;background:#999;"></div>
<div class="a" style="left:1242.37px;top:541.40px;width:4.93px;height:5.30px;background:#999;"></div>
<div class="a" style="left:1030.41px;top:546.70px;width:4.80px;height:5.00px;background:#ccc;"></div>
<div class="a" style="left:1045.55px;top:546.70px;width:4.80px;height:5.00px;background:#ccc;"></div>
<div class="a" style="left:1076.78px;top:546.70px;width:20.80px;height:5.00px;background:#eee;"></div></div>
<div class="a" style="left:992.7px;top:576.9px;width:298.7px;height:18.6px;overflow:hidden">
<div class="a t" style="left:19.80px;top:16.64px;font-size:4.2px;color:#222;font-weight:bold;-webkit-text-stroke:0;">Empfangsschein</div>
<div class="a t" style="left:101.30px;top:16.64px;font-size:4.2px;color:#222;font-weight:bold;-webkit-text-stroke:0;">Zahlteil</div>
<div class="a t" style="left:170.30px;top:16.64px;font-size:4.2px;color:#222;font-weight:bold;-webkit-text-stroke:0;">Konto / Zahlbar an</div>
</div>
<div class="a" style="left:1320.00px;top:516.00px;width:1.00px;height:129.00px;background:linear-gradient(#e8e8e8,#c8c8c8);"></div>
<div class="a" style="left:346.50px;top:606.60px;width:971.00px;height:20.60px;background:#f8f9fa;"></div>
<div class="btn lt" style="left:347px;top:606.5px;width:59px;height:20.5px;line-height:20.5px">Zurücksetzen</div>
<div class="btn md" style="left:747px;top:606.5px;width:48.5px;height:20.5px;line-height:20.5px">Stornieren</div>
<div class="btn md" style="left:804px;top:606.5px;width:62px;height:20.5px;line-height:20.5px">Zurückweisen</div>
<div class="btn md" style="left:1205px;top:606.5px;width:48px;height:20.5px;line-height:20.5px">Speichern</div>
<div class="btn md" style="left:1261px;top:606.5px;width:47.5px;height:20.5px;line-height:20.5px">Freigeben</div>
<div class="a" style="left:0.00px;top:636.00px;width:1321.00px;height:7.50px;background:linear-gradient(90deg,#fff 0px,#fff 300px,#ececec 620px,#ececec 1000px,#f3f3f3 1080px,#ececec 1160px);"></div>
<div class="a" style="left:0.00px;top:636.00px;width:1321.00px;height:7.50px;background:linear-gradient(rgba(255,255,255,0.5),rgba(255,255,255,0));"></div>
<div class="a" style="left:0.00px;top:644.00px;width:1321.00px;height:1.00px;background:#85807d;"></div>
</body></html>
